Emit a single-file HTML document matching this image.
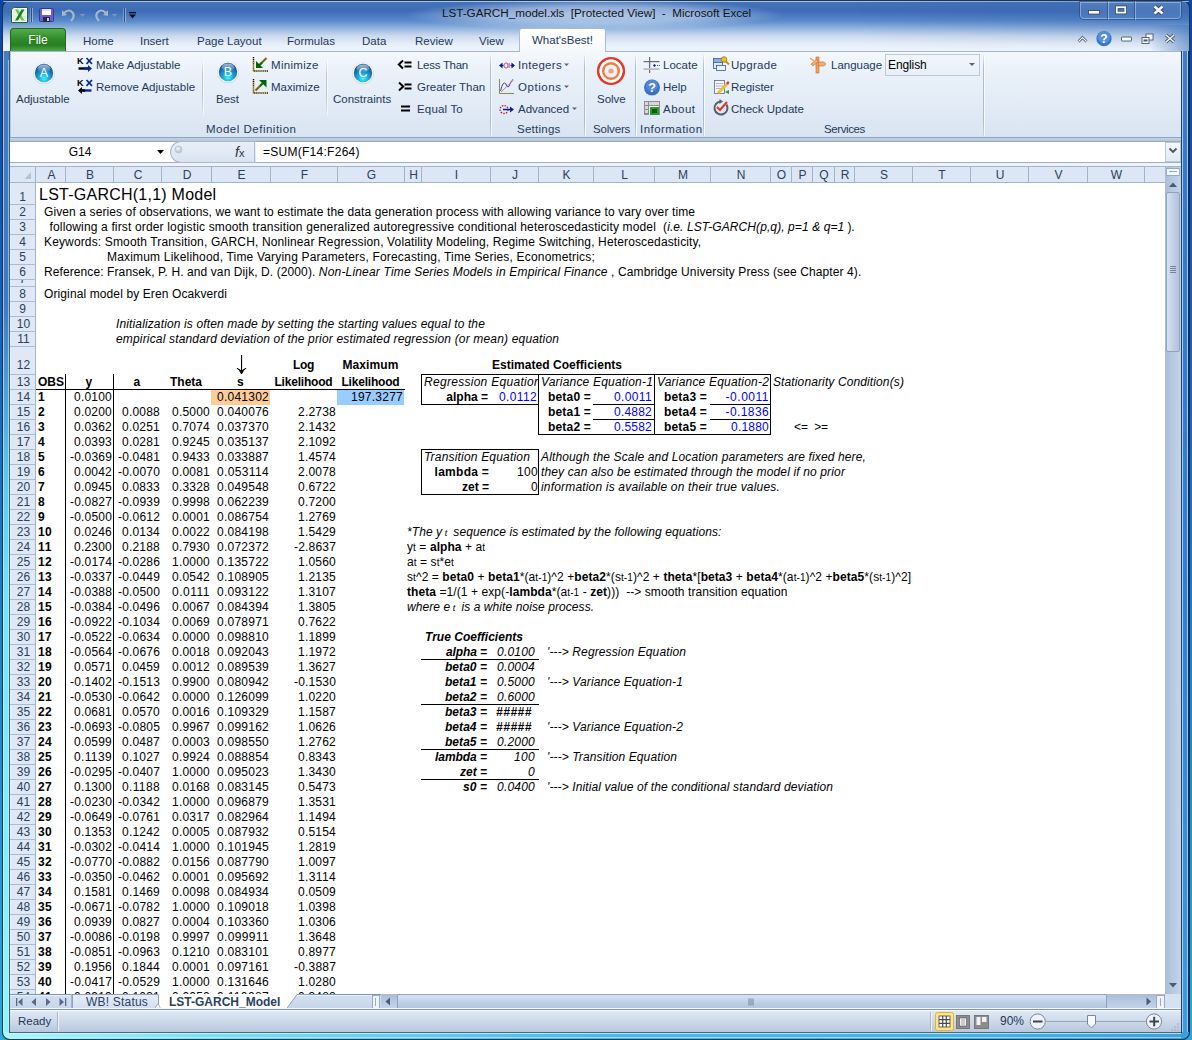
<!DOCTYPE html><html><head><meta charset="utf-8"><title>LST-GARCH_model.xls - Microsoft Excel</title><style>
*{margin:0;padding:0;box-sizing:border-box}
html,body{width:1192px;height:1040px;overflow:hidden;background:#fff}
body{position:relative;font-family:"Liberation Sans",sans-serif;}
.t{position:absolute;white-space:nowrap}
.b{position:absolute}
svg{position:absolute;overflow:visible}
</style></head><body>
<div class="b" style="left:0px;top:0px;width:1192px;height:1040px;background:linear-gradient(180deg,#0b45a6 0%,#1d6ec0 45%,#2aa8d8 100%)"></div>
<div class="b" style="left:2px;top:0px;width:8px;height:1040px;border-radius:8px 0 0 8px;border:1px solid #1b3550;border-right:none;background:linear-gradient(180deg,#4a7cc2 0px,#3f78c4 300px,#5cc8f0 480px,#70e6fc 600px,#90f4fc 1000px)"></div>
<div class="b" style="left:3px;top:6px;width:1px;height:1028px;background:rgba(220,250,255,0.6)"></div>
<div class="b" style="left:8px;top:60px;width:1px;height:970px;background:rgba(200,245,255,0.55)"></div>
<div class="b" style="left:1181px;top:0px;width:9px;height:1040px;border-radius:0 8px 8px 0;border:1px solid #10305a;border-left:none;background:linear-gradient(180deg,#4a7cc2 0px,#3578cc 200px,#3080d8 600px,#3a9ae0 1000px)"></div>
<div class="b" style="left:1182px;top:51px;width:1px;height:982px;background:#a8d0f4"></div>
<div class="b" style="left:1187px;top:20px;width:1px;height:1012px;background:#a0ccf4"></div>
<div class="b" style="left:1188px;top:6px;width:1px;height:1028px;background:#10305a"></div>
<div class="b" style="left:2px;top:1032px;width:1188px;height:8px;border-radius:0 0 8px 8px;border:1px solid #1e3c50;border-top:none;background:linear-gradient(90deg,#a8f8fc 0px,#7ae0f8 200px,#4ab8f0 600px,#42b0ec 1000px,#3aa0e0 1188px)"></div>
<div class="b" style="left:10px;top:1033px;width:1171px;height:1px;background:rgba(220,250,255,0.7)"></div>
<div class="b" style="left:10px;top:1037px;width:1171px;height:1px;background:rgba(200,240,255,0.6)"></div>
<div class="b" style="left:2px;top:0px;width:1188px;height:51px;border-radius:8px 8px 0 0;border:1px solid #1b3550;border-bottom:none;background:linear-gradient(180deg,#4673b9 0px,#3c6cb5 10px,#5a8bcc 20px,#98b8e0 28px,#cbdaee 35px,#e6eef8 43px,#f0f5fb 51px)"></div>
<div class="b" style="left:3px;top:1px;width:1186px;height:1px;border-radius:7px 7px 0 0;background:rgba(190,215,245,0.8)"></div>
<div class="b" style="left:860px;top:1px;width:329px;height:50px;border-radius:0 7px 0 0;background:linear-gradient(90deg,rgba(60,100,170,0) 0px,rgba(60,100,170,0.25) 180px,rgba(60,110,180,0.5) 329px);-webkit-mask-image:linear-gradient(180deg,#000 0px,#000 15px,rgba(0,0,0,0.3) 35px,rgba(0,0,0,0) 50px)"></div>
<div class="b" style="left:1150px;top:25px;width:39px;height:26px;background:linear-gradient(90deg,rgba(70,120,190,0) 0px,rgba(70,120,190,0.6) 39px)"></div>
<div class="b" style="left:405px;top:0px;width:380px;height:30px;background:radial-gradient(ellipse 50% 50% at center,rgba(225,236,250,0.7) 0%,rgba(225,236,250,0.5) 55%,rgba(225,236,250,0) 100%)"></div>
<div class="t" style="left:442px;top:5px;font-size:11.7px;line-height:16px;color:#141414;white-space:pre;letter-spacing:-0.02px">LST-GARCH_model.xls  [Protected View]  -  Microsoft Excel</div>
<svg style="left:11px;top:7px" width="17" height="16" viewBox="0 0 17 16">
<path d="M0.5 3.5 Q0.5 0.5 3.5 0.5 H16.5 V15.5 H0.5 Z" fill="#ffffff" stroke="#17692a" stroke-width="1"/>
<path d="M2 2 H15 V14 H2Z" fill="#e2f4e0"/>
<path d="M4 2.5 L7 2.5 L13.5 13.5 L10.5 13.5 Z" fill="#6cc24a"/>
<path d="M10.5 2.5 L13.5 2.5 L7 13.5 L4 13.5 Z" fill="#1d7b30"/>
</svg>
<div class="b" style="left:31px;top:8px;width:1px;height:14px;background:#3c4c62;box-shadow:1px 0 0 rgba(220,235,255,0.45),-1px 0 0 rgba(220,235,255,0.3)"></div>
<svg style="left:39px;top:8px" width="15" height="14" viewBox="0 0 15 14">
<rect x="0.5" y="0.5" width="14" height="13" rx="1" fill="#6b5fd0" stroke="#3d3596"/>
<rect x="3" y="1" width="9" height="6" fill="#ffffff"/>
<rect x="3" y="1" width="9" height="2" fill="#e0e6f4"/>
<rect x="4" y="9" width="7" height="5" fill="#262a3a"/>
<rect x="8" y="10" width="2" height="3" fill="#c8ccd8"/>
</svg>
<svg style="left:61px;top:8px" width="60" height="14" viewBox="0 0 60 14">
<path d="M3 5 Q8 0 12 5 Q14 9 10 13" fill="none" stroke="#a9b6c8" stroke-width="2.2"/>
<path d="M1 2 L6 7 L1 8 Z" fill="#a9b6c8"/>
<path d="M19 6 L24 6 L21.5 9 Z" fill="#8795aa"/>
<path d="M45 5 Q40 0 36 5 Q34 9 38 13" fill="none" stroke="#a9b6c8" stroke-width="2.2"/>
<path d="M47 2 L42 7 L47 8 Z" fill="#a9b6c8"/>
<path d="M51 6 L56 6 L53.5 9 Z" fill="#8795aa"/>
</svg>
<div class="b" style="left:124px;top:8px;width:1px;height:14px;background:#3c4c62;box-shadow:1px 0 0 rgba(220,235,255,0.45),-1px 0 0 rgba(220,235,255,0.3)"></div>
<svg style="left:128px;top:10px" width="10" height="10" viewBox="0 0 10 10">
<rect x="1" y="2" width="7" height="1.3" fill="#111"/>
<path d="M1 4.5 H8 L4.5 8.5 Z" fill="#111"/>
</svg>
<div class="b" style="left:1079px;top:1px;width:103px;height:19px;border:1px solid rgba(30,55,100,0.55);border-radius:0 0 5px 5px;background:linear-gradient(180deg,rgba(160,190,230,0.2),rgba(120,160,215,0.12));box-shadow:inset 0 0 0 1px rgba(200,225,250,0.45)"></div>
<div class="b" style="left:1107px;top:1px;width:1px;height:19px;background:rgba(30,55,100,0.5);box-shadow:1px 0 0 rgba(200,225,250,0.5)"></div>
<div class="b" style="left:1134px;top:1px;width:1px;height:19px;background:rgba(30,55,100,0.5);box-shadow:1px 0 0 rgba(200,225,250,0.5)"></div>
<svg style="left:1078px;top:0px" width="104" height="21" viewBox="0 0 104 21">
<rect x="10.5" y="10.5" width="11" height="3.6" fill="#f4f6fa" stroke="#3a4a60" stroke-width="0.9"/>
<rect x="38.8" y="7.2" width="8.4" height="5.4" fill="none" stroke="#3a4a60" stroke-width="3.4"/>
<rect x="38.8" y="7.2" width="8.4" height="5.4" fill="none" stroke="#f4f6fa" stroke-width="1.8"/>
<path d="M76.5 6.5 L84.5 13.5 M84.5 6.5 L76.5 13.5" stroke="#3a4a60" stroke-width="4.4"/>
<path d="M76.5 6.5 L84.5 13.5 M84.5 6.5 L76.5 13.5" stroke="#f4f6fa" stroke-width="2.6"/>
</svg>
<svg style="left:1076px;top:30px" width="104" height="18" viewBox="0 0 104 18">
<path d="M2.5 11.5 L6.5 7.5 L10.5 11.5" fill="none" stroke="#3a4a60" stroke-width="2.6"/>
<path d="M2.5 11.5 L6.5 7.5 L10.5 11.5" fill="none" stroke="#fafcff" stroke-width="1.1"/>
<circle cx="28" cy="8.7" r="7.6" fill="#3b78cc"/>
<circle cx="28" cy="7.2" r="6" fill="#6a9ee0" opacity="0.6"/>
<text x="28" y="13" font-family="Liberation Sans" font-weight="bold" font-size="12" fill="#fff" text-anchor="middle">?</text>
<rect x="45.5" y="7" width="10" height="4" rx="0.5" fill="#f8fafd" stroke="#4a5a70" stroke-width="0.9"/>
<rect x="70" y="4" width="7" height="6" fill="#f8fafd" stroke="#4a5a70" stroke-width="0.9"/>
<rect x="66" y="7.5" width="7" height="6" fill="#f8fafd" stroke="#4a5a70" stroke-width="0.9"/>
<rect x="67.5" y="9.5" width="4" height="2" fill="#4a5a70"/>
<path d="M90 5 L98 12 M98 5 L90 12" stroke="#4a5a70" stroke-width="3.2"/>
<path d="M90 5 L98 12 M98 5 L90 12" stroke="#f8fafd" stroke-width="1.4"/>
</svg>
<div class="b" style="left:10px;top:28px;width:56px;height:24px;border-radius:4px 4px 0 0;border:1px solid #206a1c;border-bottom:none;background:linear-gradient(180deg,#55ad4a 0%,#2f8a2a 45%,#2a7e26 70%,#52b048 100%)"></div>
<div class="t" style="left:10px;top:33px;font-size:12px;line-height:15px;color:#ffffff;width:56px;text-align:center;text-shadow:0 0 2px rgba(0,60,0,0.4)">File</div>
<div class="t" style="left:83px;top:34px;font-size:11.5px;line-height:15px;color:#1e395b;">Home</div>
<div class="t" style="left:140px;top:34px;font-size:11.5px;line-height:15px;color:#1e395b;">Insert</div>
<div class="t" style="left:197px;top:34px;font-size:11.5px;line-height:15px;color:#1e395b;">Page Layout</div>
<div class="t" style="left:287px;top:34px;font-size:11.5px;line-height:15px;color:#1e395b;">Formulas</div>
<div class="t" style="left:362px;top:34px;font-size:11.5px;line-height:15px;color:#1e395b;">Data</div>
<div class="t" style="left:415px;top:34px;font-size:11.5px;line-height:15px;color:#1e395b;">Review</div>
<div class="t" style="left:479px;top:34px;font-size:11.5px;line-height:15px;color:#1e395b;">View</div>
<div class="b" style="left:519px;top:28px;width:87px;height:25px;border:1px solid #a9bcd6;border-bottom:none;border-radius:3px 3px 0 0;background:linear-gradient(180deg,#ffffff 0%,#f4f8fd 100%)"></div>
<div class="t" style="left:532px;top:33px;font-size:11.5px;line-height:15px;color:#1e395b;">What'sBest!</div>
<div class="b" style="left:10px;top:51px;width:1172px;height:87px;border-top:1px solid #a5b7d0;border-left:1px solid #b8c8dc;border-right:1px solid #b8c8dc;background:linear-gradient(180deg,#f4f8fd 0px,#eaf1f9 20px,#e0e9f5 60px,#d9e4f2 86px)"></div>
<div class="b" style="left:520px;top:51px;width:85px;height:2px;background:#f4f8fd"></div>
<div class="b" style="left:10px;top:137px;width:1172px;height:1px;background:#8da5c4"></div>
<div class="b" style="left:10px;top:138px;width:1172px;height:3px;background:linear-gradient(180deg,#c4d2e3,#b5c5d9)"></div>
<div class="b" style="left:10px;top:141px;width:1172px;height:1px;background:#9aaac4"></div>
<div class="b" style="left:490px;top:55px;width:1px;height:81px;background:linear-gradient(180deg,rgba(170,190,215,0.2),#aabdd6 15%,#aabdd6 85%,rgba(170,190,215,0.4));box-shadow:1px 0 0 rgba(255,255,255,0.7)"></div>
<div class="b" style="left:584px;top:55px;width:1px;height:81px;background:linear-gradient(180deg,rgba(170,190,215,0.2),#aabdd6 15%,#aabdd6 85%,rgba(170,190,215,0.4));box-shadow:1px 0 0 rgba(255,255,255,0.7)"></div>
<div class="b" style="left:635px;top:55px;width:1px;height:81px;background:linear-gradient(180deg,rgba(170,190,215,0.2),#aabdd6 15%,#aabdd6 85%,rgba(170,190,215,0.4));box-shadow:1px 0 0 rgba(255,255,255,0.7)"></div>
<div class="b" style="left:703px;top:55px;width:1px;height:81px;background:linear-gradient(180deg,rgba(170,190,215,0.2),#aabdd6 15%,#aabdd6 85%,rgba(170,190,215,0.4));box-shadow:1px 0 0 rgba(255,255,255,0.7)"></div>
<div class="b" style="left:983px;top:55px;width:1px;height:81px;background:linear-gradient(180deg,rgba(170,190,215,0.2),#aabdd6 15%,#aabdd6 85%,rgba(170,190,215,0.4));box-shadow:1px 0 0 rgba(255,255,255,0.7)"></div>
<div class="b" style="left:202px;top:59px;width:1px;height:56px;background:linear-gradient(180deg,rgba(170,190,215,0),#b9c9dd 30%,#b9c9dd 70%,rgba(170,190,215,0));box-shadow:1px 0 0 rgba(255,255,255,0.6)"></div>
<div class="b" style="left:326px;top:59px;width:1px;height:56px;background:linear-gradient(180deg,rgba(170,190,215,0),#b9c9dd 30%,#b9c9dd 70%,rgba(170,190,215,0));box-shadow:1px 0 0 rgba(255,255,255,0.6)"></div>
<svg style="left:33px;top:62px" width="22" height="22" viewBox="0 0 22 22">
<defs><radialGradient id="gA" cx="50%" cy="80%" r="70%"><stop offset="0" stop-color="#3ff4ff"/><stop offset="0.4" stop-color="#1ea8d8"/><stop offset="1" stop-color="#0d4e98"/></radialGradient>
<linearGradient id="hA" x1="0" y1="0" x2="0" y2="1"><stop offset="0" stop-color="#fff" stop-opacity="0.65"/><stop offset="1" stop-color="#fff" stop-opacity="0"/></linearGradient></defs>
<circle cx="11" cy="11.4" r="10.9" fill="#cfd2d8"/>
<circle cx="11" cy="11" r="10.6" fill="#f2f3f5"/>
<circle cx="11" cy="11" r="9.2" fill="url(#gA)"/>
<ellipse cx="11" cy="6.5" rx="6.5" ry="4" fill="url(#hA)"/>
<text x="11" y="15.3" font-family="Liberation Sans" font-size="12.5" fill="#ffffff" text-anchor="middle">A</text>
</svg>
<svg style="left:217px;top:61px" width="22" height="22" viewBox="0 0 22 22">
<defs><radialGradient id="gB" cx="50%" cy="80%" r="70%"><stop offset="0" stop-color="#3ff4ff"/><stop offset="0.4" stop-color="#1ea8d8"/><stop offset="1" stop-color="#0d4e98"/></radialGradient>
<linearGradient id="hB" x1="0" y1="0" x2="0" y2="1"><stop offset="0" stop-color="#fff" stop-opacity="0.65"/><stop offset="1" stop-color="#fff" stop-opacity="0"/></linearGradient></defs>
<circle cx="11" cy="11.4" r="10.9" fill="#cfd2d8"/>
<circle cx="11" cy="11" r="10.6" fill="#f2f3f5"/>
<circle cx="11" cy="11" r="9.2" fill="url(#gB)"/>
<ellipse cx="11" cy="6.5" rx="6.5" ry="4" fill="url(#hB)"/>
<text x="11" y="15.3" font-family="Liberation Sans" font-size="12.5" fill="#ffffff" text-anchor="middle">B</text>
</svg>
<svg style="left:352px;top:62px" width="22" height="22" viewBox="0 0 22 22">
<defs><radialGradient id="gC" cx="50%" cy="80%" r="70%"><stop offset="0" stop-color="#3ff4ff"/><stop offset="0.4" stop-color="#1ea8d8"/><stop offset="1" stop-color="#0d4e98"/></radialGradient>
<linearGradient id="hC" x1="0" y1="0" x2="0" y2="1"><stop offset="0" stop-color="#fff" stop-opacity="0.65"/><stop offset="1" stop-color="#fff" stop-opacity="0"/></linearGradient></defs>
<circle cx="11" cy="11.4" r="10.9" fill="#cfd2d8"/>
<circle cx="11" cy="11" r="10.6" fill="#f2f3f5"/>
<circle cx="11" cy="11" r="9.2" fill="url(#gC)"/>
<ellipse cx="11" cy="6.5" rx="6.5" ry="4" fill="url(#hC)"/>
<text x="11" y="15.3" font-family="Liberation Sans" font-size="12.5" fill="#ffffff" text-anchor="middle">C</text>
</svg>
<div class="t" style="left:16px;top:92px;font-size:11.5px;line-height:15px;color:#1e395b;">Adjustable</div>
<div class="t" style="left:216px;top:92px;font-size:11.5px;line-height:15px;color:#1e395b;">Best</div>
<div class="t" style="left:333px;top:92px;font-size:11.5px;line-height:15px;color:#1e395b;">Constraints</div>
<svg style="left:77px;top:57px" width="17" height="16" viewBox="0 0 17 16">
<text x="0" y="7.2" font-family="Liberation Sans" font-weight="bold" font-size="9" fill="#000">K</text>
<path d="M9.5 1 L15 6.8 M15 1 L9.5 6.8" stroke="#0a2a9a" stroke-width="1.7"/>
<path d="M1.5 11.5 H12" stroke="#000" stroke-width="2.4"/><path d="M7 11.5 H12" stroke="#0a2a9a" stroke-width="2.4"/><path d="M11 8 L15 11.5 L11 15 Z" fill="#0a2a9a"/></svg>
<svg style="left:77px;top:79px" width="17" height="16" viewBox="0 0 17 16">
<text x="0" y="7.2" font-family="Liberation Sans" font-weight="bold" font-size="9" fill="#000">K</text>
<path d="M9.5 1 L15 6.8 M15 1 L9.5 6.8" stroke="#0a2a9a" stroke-width="1.7"/>
<path d="M4 11.5 H14.5" stroke="#0a2a9a" stroke-width="2.4"/><path d="M4 11.5 H8" stroke="#000" stroke-width="2.4"/><path d="M5 8 L1 11.5 L5 15 Z" fill="#000"/></svg>
<div class="t" style="left:96px;top:58px;font-size:11.5px;line-height:15px;color:#1e395b;">Make Adjustable</div>
<div class="t" style="left:96px;top:80px;font-size:11.5px;line-height:15px;color:#1e395b;">Remove Adjustable</div>
<svg style="left:251px;top:56px" width="18" height="38" viewBox="0 0 18 38">
<path d="M2.5 1 V15 H17" fill="none" stroke="#000" stroke-width="1.4" stroke-dasharray="1.2 0.9"/>
<path d="M2.5 1 V15 H17" fill="none" stroke="#c9a400" stroke-width="1.4" stroke-dasharray="0.9 1.2" stroke-dashoffset="1.2"/>
<path d="M15.5 2 L9 8.5" stroke="#7a6a10" stroke-width="2.2"/>
<path d="M11 6.5 L7.5 10" stroke="#1a6a1a" stroke-width="2"/>
<path d="M5 5 V12 H12 Z" fill="#006400"/>
<path d="M2.5 23 V37 H17" fill="none" stroke="#000" stroke-width="1.4" stroke-dasharray="1.2 0.9"/>
<path d="M2.5 23 V37 H17" fill="none" stroke="#c9a400" stroke-width="1.4" stroke-dasharray="0.9 1.2" stroke-dashoffset="1.2"/>
<path d="M4.5 34.5 L11 28" stroke="#7a6a10" stroke-width="2.2"/>
<path d="M9 30 L12.5 26.5" stroke="#1a6a1a" stroke-width="2"/>
<path d="M8 24 H15.5 V31.5 Z" fill="#006400"/>
</svg>
<div class="t" style="left:271px;top:58px;font-size:11.5px;line-height:15px;color:#1e395b;letter-spacing:0.3px">Minimize</div>
<div class="t" style="left:271px;top:80px;font-size:11.5px;line-height:15px;color:#1e395b;">Maximize</div>
<svg style="left:397px;top:58px" width="18" height="58" viewBox="0 0 18 58">
<path d="M6 2.5 L1.8 6.5 L6 10.5" fill="none" stroke="#000" stroke-width="2"/>
<rect x="7.5" y="3.5" width="7" height="2" fill="#000"/><rect x="7.5" y="7.5" width="7" height="2" fill="#000"/>
<path d="M2 24.5 L6.2 28.5 L2 32.5" fill="none" stroke="#000" stroke-width="2"/>
<rect x="7.5" y="25.5" width="7" height="2" fill="#000"/><rect x="7.5" y="29.5" width="7" height="2" fill="#000"/>
<rect x="4" y="47.5" width="9" height="2" fill="#000"/><rect x="4" y="51.5" width="9" height="2" fill="#000"/>
</svg>
<div class="t" style="left:417px;top:58px;font-size:11.5px;line-height:15px;color:#1e395b;letter-spacing:-0.28px">Less Than</div>
<div class="t" style="left:417px;top:80px;font-size:11.5px;line-height:15px;color:#1e395b;">Greater Than</div>
<div class="t" style="left:417px;top:102px;font-size:11.5px;line-height:15px;color:#1e395b;letter-spacing:0.17px">Equal To</div>
<div class="t" style="left:206px;top:122px;font-size:11.5px;line-height:15px;color:#1e395b;letter-spacing:0.5px">Model Definition</div>
<svg style="left:498px;top:57px" width="20" height="60" viewBox="0 0 20 60">
<path d="M1 8.5 L4.5 5.5 V11.5 Z" fill="#0d1f8a"/><path d="M17 8.5 L13.5 5.5 V11.5 Z" fill="#0d1f8a"/>
<rect x="3" y="7.8" width="2.5" height="1.4" fill="#0d1f8a"/><rect x="12.5" y="7.8" width="2.5" height="1.4" fill="#0d1f8a"/>
<ellipse cx="8" cy="8.5" rx="2" ry="2.6" fill="none" stroke="#d04a7a" stroke-width="1"/>
<rect x="10.6" y="6" width="1" height="5" fill="#d04a7a"/>
<path d="M1.5 22 V36.5 H16" fill="none" stroke="#8a8a50" stroke-width="1"/>
<path d="M2.5 34 Q5 23 8 27 Q10 33 12 27 Q13.5 23 15 22.5" fill="none" stroke="#3a4aaa" stroke-width="1"/>
<path d="M3 35 L15.5 23" stroke="#d07a9a" stroke-width="1"/>
<circle cx="6" cy="52.5" r="4" fill="none" stroke="#c02040" stroke-width="1.3" stroke-dasharray="1.5 1.2"/>
<path d="M5 52.5 H13" stroke="#0d1f8a" stroke-width="1.5"/><path d="M12 49.5 L16 52.5 L12 55.5 Z" fill="#0d1f8a"/>
</svg>
<div class="t" style="left:518px;top:58px;font-size:11.5px;line-height:15px;color:#1e395b;letter-spacing:0.3px">Integers</div>
<div class="t" style="left:518px;top:80px;font-size:11.5px;line-height:15px;color:#1e395b;letter-spacing:0.55px">Options</div>
<div class="t" style="left:518px;top:102px;font-size:11.5px;line-height:15px;color:#1e395b;">Advanced</div>
<svg style="left:562px;top:62px" width="18" height="52" viewBox="0 0 18 52">
<path d="M2 1.5 H7 L4.5 4 Z" fill="#5a6270"/>
<path d="M2 23.5 H7 L4.5 26 Z" fill="#5a6270"/>
<path d="M10 45.5 H15 L12.5 48 Z" fill="#5a6270"/>
</svg>
<div class="t" style="left:517px;top:122px;font-size:11.5px;line-height:15px;color:#1e395b;letter-spacing:0.25px">Settings</div>
<svg style="left:596px;top:56px" width="30" height="30" viewBox="0 0 30 30">
<circle cx="15" cy="15" r="12.8" fill="none" stroke="#e23a26" stroke-width="2.6"/>
<circle cx="15" cy="15" r="10.4" fill="none" stroke="#ffffff" stroke-width="2"/>
<circle cx="15" cy="15" r="7.8" fill="none" stroke="#f37a3a" stroke-width="2.4"/>
<circle cx="15" cy="15" r="2.6" fill="#f7a078"/>
</svg>
<div class="t" style="left:597px;top:92px;font-size:11.5px;line-height:15px;color:#1e395b;">Solve</div>
<div class="t" style="left:593px;top:122px;font-size:11.5px;line-height:15px;color:#1e395b;letter-spacing:-0.17px">Solvers</div>
<svg style="left:643px;top:56px" width="18" height="60" viewBox="0 0 18 60">
<rect x="6" y="1" width="1.2" height="16" fill="#6a6a6a"/>
<rect x="0.5" y="5" width="16" height="1.2" fill="#6a6a6a"/>
<rect x="0.5" y="12.2" width="16" height="1.8" fill="#b8bcc4"/>
<path d="M10 9.5 L11.5 8 L13 9.5 L11.5 11Z" fill="#0d1f8a"/><rect x="14" y="9" width="0.9" height="0.9" fill="#0d1f8a"/><rect x="15.8" y="9" width="0.9" height="0.9" fill="#0d1f8a"/>
<circle cx="9" cy="31.5" r="8" fill="#3c72c8"/>
<circle cx="9" cy="29.5" r="6" fill="#6a9ae0" opacity="0.5"/>
<text x="9" y="36" font-family="Liberation Sans" font-weight="bold" font-size="12.5" fill="#fff" text-anchor="middle">?</text>
<rect x="1" y="45" width="16" height="14" fill="#8a8d92"/>
<rect x="2" y="46" width="3" height="3" fill="#d8d8d8"/><rect x="2" y="50" width="3" height="3" fill="#d8d8d8"/><rect x="2" y="54" width="3" height="3" fill="#d8d8d8"/>
<rect x="6" y="46" width="10" height="3" fill="#d8d8d8"/>
<rect x="6" y="50" width="10" height="9" fill="#ffffff"/>
<rect x="7" y="51" width="9" height="8" fill="#2a9a2a"/><rect x="9" y="53" width="5" height="4" fill="#0a5a0a"/>
</svg>
<div class="t" style="left:663px;top:58px;font-size:11.5px;line-height:15px;color:#1e395b;">Locate</div>
<div class="t" style="left:663px;top:80px;font-size:11.5px;line-height:15px;color:#1e395b;">Help</div>
<div class="t" style="left:663px;top:102px;font-size:11.5px;line-height:15px;color:#1e395b;letter-spacing:0.5px">About</div>
<div class="t" style="left:640px;top:122px;font-size:11.5px;line-height:15px;color:#1e395b;letter-spacing:0.45px">Information</div>
<svg style="left:712px;top:56px" width="18" height="62" viewBox="0 0 18 62">
<rect x="1.5" y="2.5" width="9" height="6" fill="#8ab0e8" stroke="#3a5aa0" stroke-width="0.8"/>
<rect x="1.5" y="6.5" width="9" height="6" fill="#dde8f8" stroke="#3a5aa0" stroke-width="0.8"/>
<rect x="4.5" y="9.5" width="9" height="5" fill="#eef3fb" stroke="#3a5aa0" stroke-width="0.8"/>
<circle cx="12" cy="3.5" r="2.8" fill="#f0c020" stroke="#8a6a00" stroke-width="0.7"/>
<path d="M13.5 5 L17 8.5" stroke="#c09010" stroke-width="2"/>
<rect x="2.5" y="24.5" width="10" height="13" fill="#f4f6fa" stroke="#5a6a8a" stroke-width="0.8"/>
<path d="M4 27.5 H11 M4 30 H11 M4 32.5 H9" stroke="#8a96b0" stroke-width="0.7"/>
<path d="M5 36 L14 27 L16 29 L7 38 Z" fill="#e8c030"/>
<path d="M14 27 L16 25 L17.5 26.5 L16 29Z" fill="#c04040"/>
<path d="M13 36 L17 34 L17 38 Z" fill="#2a9a3a"/>
<path d="M14.5 48.5 A6.5 6.5 0 1 1 9 45.5" fill="none" stroke="#5a5e66" stroke-width="2"/>
<path d="M7.5 43 L11 45.5 L7.5 48" fill="#5a5e66"/>
<path d="M5 51 L8 54 L15 46" fill="none" stroke="#e23a26" stroke-width="2.2"/>
</svg>
<div class="t" style="left:731px;top:58px;font-size:11.5px;line-height:15px;color:#1e395b;letter-spacing:0.28px">Upgrade</div>
<div class="t" style="left:731px;top:80px;font-size:11.5px;line-height:15px;color:#1e395b;">Register</div>
<div class="t" style="left:731px;top:102px;font-size:11.5px;line-height:15px;color:#1e395b;">Check Update</div>
<svg style="left:809px;top:56px" width="18" height="18" viewBox="0 0 18 18">
<rect x="7" y="1" width="3" height="16" fill="#f0a060" stroke="#c86a30" stroke-width="0.6"/>
<path d="M9.5 6 H15 L17 8 L15 10 H9.5 Z" fill="#f4b070" stroke="#c86a30" stroke-width="0.6"/>
<path d="M8 3 L2 8 L4 10 L9 6Z" fill="#f4b070" stroke="#c86a30" stroke-width="0.6"/>
<path d="M1 2 L5 5" stroke="#f0a060" stroke-width="1.5"/>
</svg>
<div class="t" style="left:831px;top:58px;font-size:11.5px;line-height:15px;color:#1e395b;">Language</div>
<div class="b" style="left:885px;top:54px;width:95px;height:22px;border:1px solid #b9c9dd;background:linear-gradient(180deg,#f2f6fb,#eaf0f8)"></div>
<div class="t" style="left:888px;top:58px;font-size:12px;line-height:15px;color:#000000;letter-spacing:-0.1px">English</div>
<svg style="left:968px;top:62px" width="10" height="6" viewBox="0 0 10 6"><path d="M1 1 H7 L4 4 Z" fill="#5a6270"/></svg>
<div class="t" style="left:824px;top:122px;font-size:11.5px;line-height:15px;color:#1e395b;letter-spacing:-0.39px">Services</div>
<div class="b" style="left:10px;top:142px;width:1172px;height:20px;background:#ffffff"></div>
<div class="b" style="left:10px;top:162px;width:1171px;height:1px;background:#a0afc6"></div>
<div class="b" style="left:10px;top:163px;width:1171px;height:3px;background:#eef3fa"></div>
<div class="b" style="left:10px;top:166px;width:1171px;height:1px;background:#a3b3c8"></div>
<div class="t" style="left:10px;top:145px;font-size:12px;line-height:15px;color:#000;width:140px;text-align:center;">G14</div>
<svg style="left:156px;top:149px" width="10" height="7" viewBox="0 0 10 7"><path d="M1 1 H8 L4.5 5 Z" fill="#000"/></svg>
<div class="b" style="left:170px;top:141px;width:86px;height:22px;border:1px solid #a9b9cf;border-right:none;border-radius:11px 0 0 11px;background:linear-gradient(180deg,#e9eff8,#d9e3f0)"></div>
<svg style="left:173px;top:144px" width="12" height="12" viewBox="0 0 12 12"><circle cx="5.5" cy="5.5" r="3.5" fill="#c2ccd9" stroke="#b0bccb" stroke-width="0.6"/><circle cx="5" cy="4.8" r="2" fill="#e6ebf2"/></svg>
<div class="b" style="left:254px;top:142px;width:1px;height:20px;background:#b0bfd2"></div>
<div class="t" style="left:235px;top:144px;font-size:14px;line-height:16px;color:#333;font-family:"Liberation Serif",serif;font-weight:bold;letter-spacing:-1px"><i>f</i><span style="font-size:11px">x</span></div>
<div class="t" style="left:263px;top:145px;font-size:12px;line-height:15px;color:#000;letter-spacing:0.269px">=SUM(F14:F264)</div>
<div class="b" style="left:1165px;top:142px;width:16px;height:20px;border:1px solid #b9c8dc;background:linear-gradient(180deg,#f4f7fb,#e3eaf4)"></div>
<svg style="left:1168px;top:147px" width="10" height="8" viewBox="0 0 10 8"><path d="M1.5 1.5 L5 5 L8.5 1.5" fill="none" stroke="#4a5468" stroke-width="1.8"/></svg>
<div class="b" style="left:36px;top:183px;width:1129px;height:811px;background:#ffffff"></div>
<div class="b" style="left:10px;top:167px;width:1155px;height:16px;background:#dce6f4"></div>
<div class="b" style="left:10px;top:182px;width:1155px;height:1px;background:#9eb6ce"></div>
<div class="b" style="left:10px;top:167px;width:25px;height:15px;background:#dce6f4"></div>
<svg style="left:22px;top:170px" width="12" height="11" viewBox="0 0 12 11"><path d="M9 2 V9 H2.5 Z" fill="#b4c3d6"/></svg>
<div class="b" style="left:35px;top:167px;width:1px;height:15px;background:#9eb6ce"></div>
<div class="t" style="left:37px;top:168px;font-size:12px;line-height:14px;color:#2b3f5f;width:29px;text-align:center;">A</div>
<div class="b" style="left:65px;top:167px;width:1px;height:15px;background:#9eb6ce"></div>
<div class="t" style="left:66px;top:168px;font-size:12px;line-height:14px;color:#2b3f5f;width:48px;text-align:center;">B</div>
<div class="b" style="left:113px;top:167px;width:1px;height:15px;background:#9eb6ce"></div>
<div class="t" style="left:114px;top:168px;font-size:12px;line-height:14px;color:#2b3f5f;width:48px;text-align:center;">C</div>
<div class="b" style="left:161px;top:167px;width:1px;height:15px;background:#9eb6ce"></div>
<div class="t" style="left:162px;top:168px;font-size:12px;line-height:14px;color:#2b3f5f;width:50px;text-align:center;">D</div>
<div class="b" style="left:211px;top:167px;width:1px;height:15px;background:#9eb6ce"></div>
<div class="t" style="left:212px;top:168px;font-size:12px;line-height:14px;color:#2b3f5f;width:59px;text-align:center;">E</div>
<div class="b" style="left:270px;top:167px;width:1px;height:15px;background:#9eb6ce"></div>
<div class="t" style="left:271px;top:168px;font-size:12px;line-height:14px;color:#2b3f5f;width:67px;text-align:center;">F</div>
<div class="b" style="left:337px;top:167px;width:1px;height:15px;background:#9eb6ce"></div>
<div class="t" style="left:338px;top:168px;font-size:12px;line-height:14px;color:#2b3f5f;width:67px;text-align:center;">G</div>
<div class="b" style="left:404px;top:167px;width:1px;height:15px;background:#9eb6ce"></div>
<div class="t" style="left:405px;top:168px;font-size:12px;line-height:14px;color:#2b3f5f;width:17px;text-align:center;">H</div>
<div class="b" style="left:421px;top:167px;width:1px;height:15px;background:#9eb6ce"></div>
<div class="t" style="left:422px;top:168px;font-size:12px;line-height:14px;color:#2b3f5f;width:69px;text-align:center;">I</div>
<div class="b" style="left:490px;top:167px;width:1px;height:15px;background:#9eb6ce"></div>
<div class="t" style="left:491px;top:168px;font-size:12px;line-height:14px;color:#2b3f5f;width:48px;text-align:center;">J</div>
<div class="b" style="left:538px;top:167px;width:1px;height:15px;background:#9eb6ce"></div>
<div class="t" style="left:539px;top:168px;font-size:12px;line-height:14px;color:#2b3f5f;width:55px;text-align:center;">K</div>
<div class="b" style="left:593px;top:167px;width:1px;height:15px;background:#9eb6ce"></div>
<div class="t" style="left:594px;top:168px;font-size:12px;line-height:14px;color:#2b3f5f;width:61px;text-align:center;">L</div>
<div class="b" style="left:654px;top:167px;width:1px;height:15px;background:#9eb6ce"></div>
<div class="t" style="left:655px;top:168px;font-size:12px;line-height:14px;color:#2b3f5f;width:56px;text-align:center;">M</div>
<div class="b" style="left:710px;top:167px;width:1px;height:15px;background:#9eb6ce"></div>
<div class="t" style="left:711px;top:168px;font-size:12px;line-height:14px;color:#2b3f5f;width:60px;text-align:center;">N</div>
<div class="b" style="left:770px;top:167px;width:1px;height:15px;background:#9eb6ce"></div>
<div class="t" style="left:771px;top:168px;font-size:12px;line-height:14px;color:#2b3f5f;width:21px;text-align:center;">O</div>
<div class="b" style="left:791px;top:167px;width:1px;height:15px;background:#9eb6ce"></div>
<div class="t" style="left:792px;top:168px;font-size:12px;line-height:14px;color:#2b3f5f;width:21px;text-align:center;">P</div>
<div class="b" style="left:812px;top:167px;width:1px;height:15px;background:#9eb6ce"></div>
<div class="t" style="left:813px;top:168px;font-size:12px;line-height:14px;color:#2b3f5f;width:22px;text-align:center;">Q</div>
<div class="b" style="left:834px;top:167px;width:1px;height:15px;background:#9eb6ce"></div>
<div class="t" style="left:835px;top:168px;font-size:12px;line-height:14px;color:#2b3f5f;width:20px;text-align:center;">R</div>
<div class="b" style="left:854px;top:167px;width:1px;height:15px;background:#9eb6ce"></div>
<div class="t" style="left:855px;top:168px;font-size:12px;line-height:14px;color:#2b3f5f;width:58px;text-align:center;">S</div>
<div class="b" style="left:912px;top:167px;width:1px;height:15px;background:#9eb6ce"></div>
<div class="t" style="left:913px;top:168px;font-size:12px;line-height:14px;color:#2b3f5f;width:58px;text-align:center;">T</div>
<div class="b" style="left:970px;top:167px;width:1px;height:15px;background:#9eb6ce"></div>
<div class="t" style="left:971px;top:168px;font-size:12px;line-height:14px;color:#2b3f5f;width:58px;text-align:center;">U</div>
<div class="b" style="left:1028px;top:167px;width:1px;height:15px;background:#9eb6ce"></div>
<div class="t" style="left:1029px;top:168px;font-size:12px;line-height:14px;color:#2b3f5f;width:59px;text-align:center;">V</div>
<div class="b" style="left:1087px;top:167px;width:1px;height:15px;background:#9eb6ce"></div>
<div class="t" style="left:1088px;top:168px;font-size:12px;line-height:14px;color:#2b3f5f;width:57px;text-align:center;">W</div>
<div class="b" style="left:1144px;top:167px;width:1px;height:15px;background:#9eb6ce"></div>
<div class="b" style="left:10px;top:183px;width:25px;height:811px;background:#dfe8f4"></div>
<div class="b" style="left:10px;top:183px;width:1px;height:811px;background:#eaf1fa"></div>
<div class="b" style="left:35px;top:183px;width:1px;height:811px;background:#9eb6ce"></div>
<div class="b" style="left:10px;top:204px;width:25px;height:1px;background:#a9bcd3"></div>
<div class="t" style="left:10px;top:190px;font-size:12px;line-height:15px;color:#2b3f5f;width:25px;text-align:center;">1</div>
<div class="b" style="left:10px;top:219px;width:25px;height:1px;background:#a9bcd3"></div>
<div class="t" style="left:10px;top:205px;font-size:12px;line-height:15px;color:#2b3f5f;width:25px;text-align:center;">2</div>
<div class="b" style="left:10px;top:234px;width:25px;height:1px;background:#a9bcd3"></div>
<div class="t" style="left:10px;top:220px;font-size:12px;line-height:15px;color:#2b3f5f;width:25px;text-align:center;">3</div>
<div class="b" style="left:10px;top:249px;width:25px;height:1px;background:#a9bcd3"></div>
<div class="t" style="left:10px;top:235px;font-size:12px;line-height:15px;color:#2b3f5f;width:25px;text-align:center;">4</div>
<div class="b" style="left:10px;top:264px;width:25px;height:1px;background:#a9bcd3"></div>
<div class="t" style="left:10px;top:250px;font-size:12px;line-height:15px;color:#2b3f5f;width:25px;text-align:center;">5</div>
<div class="b" style="left:10px;top:279px;width:25px;height:1px;background:#a9bcd3"></div>
<div class="t" style="left:10px;top:265px;font-size:12px;line-height:15px;color:#2b3f5f;width:25px;text-align:center;">6</div>
<div class="b" style="left:10px;top:286px;width:25px;height:1px;background:#a9bcd3"></div>
<div class="b" style="left:11px;top:280px;width:25px;height:6px;overflow:hidden"><div class="t" style="left:-1px;top:-8px;width:25px;text-align:center;font-size:12px;line-height:15px;color:#2b3f5f">7</div></div>
<div class="b" style="left:10px;top:301px;width:25px;height:1px;background:#a9bcd3"></div>
<div class="t" style="left:10px;top:287px;font-size:12px;line-height:15px;color:#2b3f5f;width:25px;text-align:center;">8</div>
<div class="b" style="left:10px;top:316px;width:25px;height:1px;background:#a9bcd3"></div>
<div class="t" style="left:10px;top:302px;font-size:12px;line-height:15px;color:#2b3f5f;width:25px;text-align:center;">9</div>
<div class="b" style="left:10px;top:331px;width:25px;height:1px;background:#a9bcd3"></div>
<div class="t" style="left:11px;top:317px;font-size:12px;line-height:15px;color:#2b3f5f;width:25px;text-align:center;">10</div>
<div class="b" style="left:10px;top:346px;width:25px;height:1px;background:#a9bcd3"></div>
<div class="t" style="left:11px;top:332px;font-size:12px;line-height:15px;color:#2b3f5f;width:25px;text-align:center;">11</div>
<div class="b" style="left:10px;top:374px;width:25px;height:1px;background:#a9bcd3"></div>
<div class="t" style="left:11px;top:358px;font-size:12px;line-height:15px;color:#2b3f5f;width:25px;text-align:center;">12</div>
<div class="b" style="left:10px;top:389px;width:25px;height:1px;background:#a9bcd3"></div>
<div class="t" style="left:11px;top:375px;font-size:12px;line-height:15px;color:#2b3f5f;width:25px;text-align:center;">13</div>
<div class="b" style="left:10px;top:404px;width:25px;height:1px;background:#a9bcd3"></div>
<div class="t" style="left:11px;top:390px;font-size:12px;line-height:15px;color:#2b3f5f;width:25px;text-align:center;">14</div>
<div class="b" style="left:10px;top:419px;width:25px;height:1px;background:#a9bcd3"></div>
<div class="t" style="left:11px;top:405px;font-size:12px;line-height:15px;color:#2b3f5f;width:25px;text-align:center;">15</div>
<div class="b" style="left:10px;top:434px;width:25px;height:1px;background:#a9bcd3"></div>
<div class="t" style="left:11px;top:420px;font-size:12px;line-height:15px;color:#2b3f5f;width:25px;text-align:center;">16</div>
<div class="b" style="left:10px;top:449px;width:25px;height:1px;background:#a9bcd3"></div>
<div class="t" style="left:11px;top:435px;font-size:12px;line-height:15px;color:#2b3f5f;width:25px;text-align:center;">17</div>
<div class="b" style="left:10px;top:464px;width:25px;height:1px;background:#a9bcd3"></div>
<div class="t" style="left:11px;top:450px;font-size:12px;line-height:15px;color:#2b3f5f;width:25px;text-align:center;">18</div>
<div class="b" style="left:10px;top:479px;width:25px;height:1px;background:#a9bcd3"></div>
<div class="t" style="left:11px;top:465px;font-size:12px;line-height:15px;color:#2b3f5f;width:25px;text-align:center;">19</div>
<div class="b" style="left:10px;top:494px;width:25px;height:1px;background:#a9bcd3"></div>
<div class="t" style="left:11px;top:480px;font-size:12px;line-height:15px;color:#2b3f5f;width:25px;text-align:center;">20</div>
<div class="b" style="left:10px;top:509px;width:25px;height:1px;background:#a9bcd3"></div>
<div class="t" style="left:11px;top:495px;font-size:12px;line-height:15px;color:#2b3f5f;width:25px;text-align:center;">21</div>
<div class="b" style="left:10px;top:524px;width:25px;height:1px;background:#a9bcd3"></div>
<div class="t" style="left:11px;top:510px;font-size:12px;line-height:15px;color:#2b3f5f;width:25px;text-align:center;">22</div>
<div class="b" style="left:10px;top:539px;width:25px;height:1px;background:#a9bcd3"></div>
<div class="t" style="left:11px;top:525px;font-size:12px;line-height:15px;color:#2b3f5f;width:25px;text-align:center;">23</div>
<div class="b" style="left:10px;top:554px;width:25px;height:1px;background:#a9bcd3"></div>
<div class="t" style="left:11px;top:540px;font-size:12px;line-height:15px;color:#2b3f5f;width:25px;text-align:center;">24</div>
<div class="b" style="left:10px;top:569px;width:25px;height:1px;background:#a9bcd3"></div>
<div class="t" style="left:11px;top:555px;font-size:12px;line-height:15px;color:#2b3f5f;width:25px;text-align:center;">25</div>
<div class="b" style="left:10px;top:584px;width:25px;height:1px;background:#a9bcd3"></div>
<div class="t" style="left:11px;top:570px;font-size:12px;line-height:15px;color:#2b3f5f;width:25px;text-align:center;">26</div>
<div class="b" style="left:10px;top:599px;width:25px;height:1px;background:#a9bcd3"></div>
<div class="t" style="left:11px;top:585px;font-size:12px;line-height:15px;color:#2b3f5f;width:25px;text-align:center;">27</div>
<div class="b" style="left:10px;top:614px;width:25px;height:1px;background:#a9bcd3"></div>
<div class="t" style="left:11px;top:600px;font-size:12px;line-height:15px;color:#2b3f5f;width:25px;text-align:center;">28</div>
<div class="b" style="left:10px;top:629px;width:25px;height:1px;background:#a9bcd3"></div>
<div class="t" style="left:11px;top:615px;font-size:12px;line-height:15px;color:#2b3f5f;width:25px;text-align:center;">29</div>
<div class="b" style="left:10px;top:644px;width:25px;height:1px;background:#a9bcd3"></div>
<div class="t" style="left:11px;top:630px;font-size:12px;line-height:15px;color:#2b3f5f;width:25px;text-align:center;">30</div>
<div class="b" style="left:10px;top:659px;width:25px;height:1px;background:#a9bcd3"></div>
<div class="t" style="left:11px;top:645px;font-size:12px;line-height:15px;color:#2b3f5f;width:25px;text-align:center;">31</div>
<div class="b" style="left:10px;top:674px;width:25px;height:1px;background:#a9bcd3"></div>
<div class="t" style="left:11px;top:660px;font-size:12px;line-height:15px;color:#2b3f5f;width:25px;text-align:center;">32</div>
<div class="b" style="left:10px;top:689px;width:25px;height:1px;background:#a9bcd3"></div>
<div class="t" style="left:11px;top:675px;font-size:12px;line-height:15px;color:#2b3f5f;width:25px;text-align:center;">33</div>
<div class="b" style="left:10px;top:704px;width:25px;height:1px;background:#a9bcd3"></div>
<div class="t" style="left:11px;top:690px;font-size:12px;line-height:15px;color:#2b3f5f;width:25px;text-align:center;">34</div>
<div class="b" style="left:10px;top:719px;width:25px;height:1px;background:#a9bcd3"></div>
<div class="t" style="left:11px;top:705px;font-size:12px;line-height:15px;color:#2b3f5f;width:25px;text-align:center;">35</div>
<div class="b" style="left:10px;top:734px;width:25px;height:1px;background:#a9bcd3"></div>
<div class="t" style="left:11px;top:720px;font-size:12px;line-height:15px;color:#2b3f5f;width:25px;text-align:center;">36</div>
<div class="b" style="left:10px;top:749px;width:25px;height:1px;background:#a9bcd3"></div>
<div class="t" style="left:11px;top:735px;font-size:12px;line-height:15px;color:#2b3f5f;width:25px;text-align:center;">37</div>
<div class="b" style="left:10px;top:764px;width:25px;height:1px;background:#a9bcd3"></div>
<div class="t" style="left:11px;top:750px;font-size:12px;line-height:15px;color:#2b3f5f;width:25px;text-align:center;">38</div>
<div class="b" style="left:10px;top:779px;width:25px;height:1px;background:#a9bcd3"></div>
<div class="t" style="left:11px;top:765px;font-size:12px;line-height:15px;color:#2b3f5f;width:25px;text-align:center;">39</div>
<div class="b" style="left:10px;top:794px;width:25px;height:1px;background:#a9bcd3"></div>
<div class="t" style="left:11px;top:780px;font-size:12px;line-height:15px;color:#2b3f5f;width:25px;text-align:center;">40</div>
<div class="b" style="left:10px;top:809px;width:25px;height:1px;background:#a9bcd3"></div>
<div class="t" style="left:11px;top:795px;font-size:12px;line-height:15px;color:#2b3f5f;width:25px;text-align:center;">41</div>
<div class="b" style="left:10px;top:824px;width:25px;height:1px;background:#a9bcd3"></div>
<div class="t" style="left:11px;top:810px;font-size:12px;line-height:15px;color:#2b3f5f;width:25px;text-align:center;">42</div>
<div class="b" style="left:10px;top:839px;width:25px;height:1px;background:#a9bcd3"></div>
<div class="t" style="left:11px;top:825px;font-size:12px;line-height:15px;color:#2b3f5f;width:25px;text-align:center;">43</div>
<div class="b" style="left:10px;top:854px;width:25px;height:1px;background:#a9bcd3"></div>
<div class="t" style="left:11px;top:840px;font-size:12px;line-height:15px;color:#2b3f5f;width:25px;text-align:center;">44</div>
<div class="b" style="left:10px;top:869px;width:25px;height:1px;background:#a9bcd3"></div>
<div class="t" style="left:11px;top:855px;font-size:12px;line-height:15px;color:#2b3f5f;width:25px;text-align:center;">45</div>
<div class="b" style="left:10px;top:884px;width:25px;height:1px;background:#a9bcd3"></div>
<div class="t" style="left:11px;top:870px;font-size:12px;line-height:15px;color:#2b3f5f;width:25px;text-align:center;">46</div>
<div class="b" style="left:10px;top:899px;width:25px;height:1px;background:#a9bcd3"></div>
<div class="t" style="left:11px;top:885px;font-size:12px;line-height:15px;color:#2b3f5f;width:25px;text-align:center;">47</div>
<div class="b" style="left:10px;top:914px;width:25px;height:1px;background:#a9bcd3"></div>
<div class="t" style="left:11px;top:900px;font-size:12px;line-height:15px;color:#2b3f5f;width:25px;text-align:center;">48</div>
<div class="b" style="left:10px;top:929px;width:25px;height:1px;background:#a9bcd3"></div>
<div class="t" style="left:11px;top:915px;font-size:12px;line-height:15px;color:#2b3f5f;width:25px;text-align:center;">49</div>
<div class="b" style="left:10px;top:944px;width:25px;height:1px;background:#a9bcd3"></div>
<div class="t" style="left:11px;top:930px;font-size:12px;line-height:15px;color:#2b3f5f;width:25px;text-align:center;">50</div>
<div class="b" style="left:10px;top:959px;width:25px;height:1px;background:#a9bcd3"></div>
<div class="t" style="left:11px;top:945px;font-size:12px;line-height:15px;color:#2b3f5f;width:25px;text-align:center;">51</div>
<div class="b" style="left:10px;top:974px;width:25px;height:1px;background:#a9bcd3"></div>
<div class="t" style="left:11px;top:960px;font-size:12px;line-height:15px;color:#2b3f5f;width:25px;text-align:center;">52</div>
<div class="b" style="left:10px;top:989px;width:25px;height:1px;background:#a9bcd3"></div>
<div class="t" style="left:11px;top:975px;font-size:12px;line-height:15px;color:#2b3f5f;width:25px;text-align:center;">53</div>
<div class="b" style="left:10px;top:1004px;width:25px;height:1px;background:#a9bcd3"></div>
<div class="t" style="left:11px;top:990px;font-size:12px;line-height:15px;color:#2b3f5f;width:25px;text-align:center;">54</div>
<div class="t" style="left:39px;top:185px;font-size:16px;line-height:20px;color:#000;letter-spacing:0.245px;">LST-GARCH(1,1) Model</div>
<div class="t" style="left:44px;top:205px;font-size:12px;line-height:15px;color:#000;letter-spacing:0.106px;">Given a series of observations, we want to estimate the data generation process with allowing variance to vary over time</div>
<div class="t" style="left:49.5px;top:220px;font-size:12px;line-height:15px;color:#000;white-space:pre;"><span style="letter-spacing:0.154px;">following a first order logistic smooth transition generalized autoregressive conditional heteroscedasticity model  (</span><span style="letter-spacing:0.096px;font-style:italic;">i.e. LST-GARCH(p,q), p=1 &amp; q=1</span><span style="letter-spacing:-0.181px;"> ).</span></div>
<div class="t" style="left:44px;top:235px;font-size:12px;line-height:15px;color:#000;letter-spacing:0.143px;">Keywords: Smooth Transition, GARCH, Nonlinear Regression, Volatility Modeling, Regime Switching, Heteroscedasticity,</div>
<div class="t" style="left:107px;top:250px;font-size:12px;line-height:15px;color:#000;letter-spacing:0.183px;">Maximum Likelihood, Time Varying Parameters, Forecasting, Time Series, Econometrics;</div>
<div class="t" style="left:44px;top:265px;font-size:12px;line-height:15px;color:#000;white-space:pre;"><span style="letter-spacing:0.097px;">Reference: Fransek, P. H. and van Dijk, D. (2000). </span><span style="letter-spacing:0.176px;font-style:italic;">Non-Linear Time Series Models in Empirical Finance</span><span style="letter-spacing:0.107px;"> , Cambridge University Press (see Chapter 4).</span></div>
<div class="t" style="left:44px;top:287px;font-size:12px;line-height:15px;color:#000;letter-spacing:0.112px;">Original model by Eren Ocakverdi</div>
<div class="t" style="left:116px;top:317px;font-size:12px;line-height:15px;color:#000;font-style:italic;letter-spacing:0.131px;">Initialization is often made by setting the starting values equal to the</div>
<div class="t" style="left:116px;top:332px;font-size:12px;line-height:15px;color:#000;font-style:italic;letter-spacing:0.167px;">empirical standard deviation of the prior estimated regression (or mean) equation</div>
<svg style="left:230px;top:350px" width="24" height="28" viewBox="0 0 24 28"><rect x="11" y="5" width="1.1" height="17" fill="#000"/><path d="M7 18 Q10 20.5 11.5 24 Q13 20.5 16 18 L15.6 18.6 Q13.5 19.5 11.5 21 Q9.5 19.5 7.4 18.6 Z" fill="#000" stroke="#000" stroke-width="0.9" stroke-linejoin="round"/></svg>
<div class="t" style="left:103.5px;top:358px;font-size:12px;line-height:15px;color:#000;font-weight:bold;width:400px;text-align:center;letter-spacing:-0.330px;">Log</div>
<div class="t" style="left:170.5px;top:358px;font-size:12px;line-height:15px;color:#000;font-weight:bold;width:400px;text-align:center;letter-spacing:0.093px;">Maximum</div>
<div class="t" style="left:357px;top:358px;font-size:12px;line-height:15px;color:#000;font-weight:bold;width:400px;text-align:center;letter-spacing:0.029px;">Estimated Coefficients</div>
<div class="t" style="left:38px;top:375px;font-size:12px;line-height:15px;color:#000;font-weight:bold;letter-spacing:-0.001px;">OBS</div>
<div class="t" style="left:-111.0px;top:375px;font-size:12px;line-height:15px;color:#000;font-weight:bold;width:400px;text-align:center;letter-spacing:0.326px;">y</div>
<div class="t" style="left:-63.0px;top:375px;font-size:12px;line-height:15px;color:#000;font-weight:bold;width:400px;text-align:center;letter-spacing:0.326px;">a</div>
<div class="t" style="left:-14.0px;top:375px;font-size:12px;line-height:15px;color:#000;font-weight:bold;width:400px;text-align:center;letter-spacing:-0.001px;">Theta</div>
<div class="t" style="left:40.5px;top:375px;font-size:12px;line-height:15px;color:#000;font-weight:bold;width:400px;text-align:center;letter-spacing:0.326px;">s</div>
<div class="t" style="left:103.5px;top:375px;font-size:12px;line-height:15px;color:#000;font-weight:bold;width:400px;text-align:center;letter-spacing:-0.200px;">Likelihood</div>
<div class="t" style="left:170.5px;top:375px;font-size:12px;line-height:15px;color:#000;font-weight:bold;width:400px;text-align:center;letter-spacing:-0.200px;">Likelihood</div>
<div class="b" style="left:36px;top:389px;width:369px;height:1px;background:#000"></div>
<div class="b" style="left:65px;top:374px;width:1px;height:620px;background:#000"></div>
<div class="b" style="left:113px;top:374px;width:1px;height:620px;background:#000"></div>
<div class="b" style="left:211px;top:390px;width:59px;height:15px;background:#ffcc99"></div>
<div class="b" style="left:337px;top:390px;width:67px;height:15px;background:#99ccff"></div>
<div class="t" style="left:38px;top:390px;font-size:12px;line-height:15px;color:#000;font-weight:bold;letter-spacing:0.326px;">1</div>
<div class="t" style="left:-188px;top:390px;font-size:12px;line-height:15px;color:#000;width:300px;text-align:right;letter-spacing:0.216px;">0.0100</div>
<div class="t" style="left:-31px;top:390px;font-size:12px;line-height:15px;color:#000;width:300px;text-align:right;letter-spacing:0.244px;">0.041302</div>
<div class="t" style="left:38px;top:405px;font-size:12px;line-height:15px;color:#000;font-weight:bold;letter-spacing:0.326px;">2</div>
<div class="t" style="left:-188px;top:405px;font-size:12px;line-height:15px;color:#000;width:300px;text-align:right;letter-spacing:0.216px;">0.0200</div>
<div class="t" style="left:-140px;top:405px;font-size:12px;line-height:15px;color:#000;width:300px;text-align:right;letter-spacing:0.216px;">0.0088</div>
<div class="t" style="left:-90px;top:405px;font-size:12px;line-height:15px;color:#000;width:300px;text-align:right;letter-spacing:0.216px;">0.5000</div>
<div class="t" style="left:-31px;top:405px;font-size:12px;line-height:15px;color:#000;width:300px;text-align:right;letter-spacing:0.244px;">0.040076</div>
<div class="t" style="left:36px;top:405px;font-size:12px;line-height:15px;color:#000;width:300px;text-align:right;letter-spacing:0.216px;">2.2738</div>
<div class="t" style="left:38px;top:420px;font-size:12px;line-height:15px;color:#000;font-weight:bold;letter-spacing:0.326px;">3</div>
<div class="t" style="left:-188px;top:420px;font-size:12px;line-height:15px;color:#000;width:300px;text-align:right;letter-spacing:0.216px;">0.0362</div>
<div class="t" style="left:-140px;top:420px;font-size:12px;line-height:15px;color:#000;width:300px;text-align:right;letter-spacing:0.216px;">0.0251</div>
<div class="t" style="left:-90px;top:420px;font-size:12px;line-height:15px;color:#000;width:300px;text-align:right;letter-spacing:0.216px;">0.7074</div>
<div class="t" style="left:-31px;top:420px;font-size:12px;line-height:15px;color:#000;width:300px;text-align:right;letter-spacing:0.244px;">0.037370</div>
<div class="t" style="left:36px;top:420px;font-size:12px;line-height:15px;color:#000;width:300px;text-align:right;letter-spacing:0.216px;">2.1432</div>
<div class="t" style="left:38px;top:435px;font-size:12px;line-height:15px;color:#000;font-weight:bold;letter-spacing:0.326px;">4</div>
<div class="t" style="left:-188px;top:435px;font-size:12px;line-height:15px;color:#000;width:300px;text-align:right;letter-spacing:0.216px;">0.0393</div>
<div class="t" style="left:-140px;top:435px;font-size:12px;line-height:15px;color:#000;width:300px;text-align:right;letter-spacing:0.216px;">0.0281</div>
<div class="t" style="left:-90px;top:435px;font-size:12px;line-height:15px;color:#000;width:300px;text-align:right;letter-spacing:0.216px;">0.9245</div>
<div class="t" style="left:-31px;top:435px;font-size:12px;line-height:15px;color:#000;width:300px;text-align:right;letter-spacing:0.244px;">0.035137</div>
<div class="t" style="left:36px;top:435px;font-size:12px;line-height:15px;color:#000;width:300px;text-align:right;letter-spacing:0.216px;">2.1092</div>
<div class="t" style="left:38px;top:450px;font-size:12px;line-height:15px;color:#000;font-weight:bold;letter-spacing:0.326px;">5</div>
<div class="t" style="left:-188px;top:450px;font-size:12px;line-height:15px;color:#000;width:300px;text-align:right;letter-spacing:0.186px;">-0.0369</div>
<div class="t" style="left:-140px;top:450px;font-size:12px;line-height:15px;color:#000;width:300px;text-align:right;letter-spacing:0.186px;">-0.0481</div>
<div class="t" style="left:-90px;top:450px;font-size:12px;line-height:15px;color:#000;width:300px;text-align:right;letter-spacing:0.216px;">0.9433</div>
<div class="t" style="left:-31px;top:450px;font-size:12px;line-height:15px;color:#000;width:300px;text-align:right;letter-spacing:0.244px;">0.033887</div>
<div class="t" style="left:36px;top:450px;font-size:12px;line-height:15px;color:#000;width:300px;text-align:right;letter-spacing:0.216px;">1.4574</div>
<div class="t" style="left:38px;top:465px;font-size:12px;line-height:15px;color:#000;font-weight:bold;letter-spacing:0.326px;">6</div>
<div class="t" style="left:-188px;top:465px;font-size:12px;line-height:15px;color:#000;width:300px;text-align:right;letter-spacing:0.216px;">0.0042</div>
<div class="t" style="left:-140px;top:465px;font-size:12px;line-height:15px;color:#000;width:300px;text-align:right;letter-spacing:0.186px;">-0.0070</div>
<div class="t" style="left:-90px;top:465px;font-size:12px;line-height:15px;color:#000;width:300px;text-align:right;letter-spacing:0.216px;">0.0081</div>
<div class="t" style="left:-31px;top:465px;font-size:12px;line-height:15px;color:#000;width:300px;text-align:right;letter-spacing:0.355px;">0.053114</div>
<div class="t" style="left:36px;top:465px;font-size:12px;line-height:15px;color:#000;width:300px;text-align:right;letter-spacing:0.216px;">2.0078</div>
<div class="t" style="left:38px;top:480px;font-size:12px;line-height:15px;color:#000;font-weight:bold;letter-spacing:0.326px;">7</div>
<div class="t" style="left:-188px;top:480px;font-size:12px;line-height:15px;color:#000;width:300px;text-align:right;letter-spacing:0.216px;">0.0945</div>
<div class="t" style="left:-140px;top:480px;font-size:12px;line-height:15px;color:#000;width:300px;text-align:right;letter-spacing:0.216px;">0.0833</div>
<div class="t" style="left:-90px;top:480px;font-size:12px;line-height:15px;color:#000;width:300px;text-align:right;letter-spacing:0.216px;">0.3328</div>
<div class="t" style="left:-31px;top:480px;font-size:12px;line-height:15px;color:#000;width:300px;text-align:right;letter-spacing:0.244px;">0.049548</div>
<div class="t" style="left:36px;top:480px;font-size:12px;line-height:15px;color:#000;width:300px;text-align:right;letter-spacing:0.216px;">0.6722</div>
<div class="t" style="left:38px;top:495px;font-size:12px;line-height:15px;color:#000;font-weight:bold;letter-spacing:0.326px;">8</div>
<div class="t" style="left:-188px;top:495px;font-size:12px;line-height:15px;color:#000;width:300px;text-align:right;letter-spacing:0.186px;">-0.0827</div>
<div class="t" style="left:-140px;top:495px;font-size:12px;line-height:15px;color:#000;width:300px;text-align:right;letter-spacing:0.186px;">-0.0939</div>
<div class="t" style="left:-90px;top:495px;font-size:12px;line-height:15px;color:#000;width:300px;text-align:right;letter-spacing:0.216px;">0.9998</div>
<div class="t" style="left:-31px;top:495px;font-size:12px;line-height:15px;color:#000;width:300px;text-align:right;letter-spacing:0.244px;">0.062239</div>
<div class="t" style="left:36px;top:495px;font-size:12px;line-height:15px;color:#000;width:300px;text-align:right;letter-spacing:0.216px;">0.7200</div>
<div class="t" style="left:38px;top:510px;font-size:12px;line-height:15px;color:#000;font-weight:bold;letter-spacing:0.326px;">9</div>
<div class="t" style="left:-188px;top:510px;font-size:12px;line-height:15px;color:#000;width:300px;text-align:right;letter-spacing:0.186px;">-0.0500</div>
<div class="t" style="left:-140px;top:510px;font-size:12px;line-height:15px;color:#000;width:300px;text-align:right;letter-spacing:0.186px;">-0.0612</div>
<div class="t" style="left:-90px;top:510px;font-size:12px;line-height:15px;color:#000;width:300px;text-align:right;letter-spacing:0.216px;">0.0001</div>
<div class="t" style="left:-31px;top:510px;font-size:12px;line-height:15px;color:#000;width:300px;text-align:right;letter-spacing:0.244px;">0.086754</div>
<div class="t" style="left:36px;top:510px;font-size:12px;line-height:15px;color:#000;width:300px;text-align:right;letter-spacing:0.216px;">1.2769</div>
<div class="t" style="left:38px;top:525px;font-size:12px;line-height:15px;color:#000;font-weight:bold;letter-spacing:0.326px;">10</div>
<div class="t" style="left:-188px;top:525px;font-size:12px;line-height:15px;color:#000;width:300px;text-align:right;letter-spacing:0.216px;">0.0246</div>
<div class="t" style="left:-140px;top:525px;font-size:12px;line-height:15px;color:#000;width:300px;text-align:right;letter-spacing:0.216px;">0.0134</div>
<div class="t" style="left:-90px;top:525px;font-size:12px;line-height:15px;color:#000;width:300px;text-align:right;letter-spacing:0.216px;">0.0022</div>
<div class="t" style="left:-31px;top:525px;font-size:12px;line-height:15px;color:#000;width:300px;text-align:right;letter-spacing:0.244px;">0.084198</div>
<div class="t" style="left:36px;top:525px;font-size:12px;line-height:15px;color:#000;width:300px;text-align:right;letter-spacing:0.216px;">1.5429</div>
<div class="t" style="left:38px;top:540px;font-size:12px;line-height:15px;color:#000;font-weight:bold;letter-spacing:0.657px;">11</div>
<div class="t" style="left:-188px;top:540px;font-size:12px;line-height:15px;color:#000;width:300px;text-align:right;letter-spacing:0.216px;">0.2300</div>
<div class="t" style="left:-140px;top:540px;font-size:12px;line-height:15px;color:#000;width:300px;text-align:right;letter-spacing:0.216px;">0.2188</div>
<div class="t" style="left:-90px;top:540px;font-size:12px;line-height:15px;color:#000;width:300px;text-align:right;letter-spacing:0.216px;">0.7930</div>
<div class="t" style="left:-31px;top:540px;font-size:12px;line-height:15px;color:#000;width:300px;text-align:right;letter-spacing:0.244px;">0.072372</div>
<div class="t" style="left:36px;top:540px;font-size:12px;line-height:15px;color:#000;width:300px;text-align:right;letter-spacing:0.186px;">-2.8637</div>
<div class="t" style="left:38px;top:555px;font-size:12px;line-height:15px;color:#000;font-weight:bold;letter-spacing:0.326px;">12</div>
<div class="t" style="left:-188px;top:555px;font-size:12px;line-height:15px;color:#000;width:300px;text-align:right;letter-spacing:0.186px;">-0.0174</div>
<div class="t" style="left:-140px;top:555px;font-size:12px;line-height:15px;color:#000;width:300px;text-align:right;letter-spacing:0.186px;">-0.0286</div>
<div class="t" style="left:-90px;top:555px;font-size:12px;line-height:15px;color:#000;width:300px;text-align:right;letter-spacing:0.216px;">1.0000</div>
<div class="t" style="left:-31px;top:555px;font-size:12px;line-height:15px;color:#000;width:300px;text-align:right;letter-spacing:0.244px;">0.135722</div>
<div class="t" style="left:36px;top:555px;font-size:12px;line-height:15px;color:#000;width:300px;text-align:right;letter-spacing:0.216px;">1.0560</div>
<div class="t" style="left:38px;top:570px;font-size:12px;line-height:15px;color:#000;font-weight:bold;letter-spacing:0.326px;">13</div>
<div class="t" style="left:-188px;top:570px;font-size:12px;line-height:15px;color:#000;width:300px;text-align:right;letter-spacing:0.186px;">-0.0337</div>
<div class="t" style="left:-140px;top:570px;font-size:12px;line-height:15px;color:#000;width:300px;text-align:right;letter-spacing:0.186px;">-0.0449</div>
<div class="t" style="left:-90px;top:570px;font-size:12px;line-height:15px;color:#000;width:300px;text-align:right;letter-spacing:0.216px;">0.0542</div>
<div class="t" style="left:-31px;top:570px;font-size:12px;line-height:15px;color:#000;width:300px;text-align:right;letter-spacing:0.244px;">0.108905</div>
<div class="t" style="left:36px;top:570px;font-size:12px;line-height:15px;color:#000;width:300px;text-align:right;letter-spacing:0.216px;">1.2135</div>
<div class="t" style="left:38px;top:585px;font-size:12px;line-height:15px;color:#000;font-weight:bold;letter-spacing:0.326px;">14</div>
<div class="t" style="left:-188px;top:585px;font-size:12px;line-height:15px;color:#000;width:300px;text-align:right;letter-spacing:0.186px;">-0.0388</div>
<div class="t" style="left:-140px;top:585px;font-size:12px;line-height:15px;color:#000;width:300px;text-align:right;letter-spacing:0.186px;">-0.0500</div>
<div class="t" style="left:-90px;top:585px;font-size:12px;line-height:15px;color:#000;width:300px;text-align:right;letter-spacing:0.513px;">0.0111</div>
<div class="t" style="left:-31px;top:585px;font-size:12px;line-height:15px;color:#000;width:300px;text-align:right;letter-spacing:0.244px;">0.093122</div>
<div class="t" style="left:36px;top:585px;font-size:12px;line-height:15px;color:#000;width:300px;text-align:right;letter-spacing:0.216px;">1.3107</div>
<div class="t" style="left:38px;top:600px;font-size:12px;line-height:15px;color:#000;font-weight:bold;letter-spacing:0.326px;">15</div>
<div class="t" style="left:-188px;top:600px;font-size:12px;line-height:15px;color:#000;width:300px;text-align:right;letter-spacing:0.186px;">-0.0384</div>
<div class="t" style="left:-140px;top:600px;font-size:12px;line-height:15px;color:#000;width:300px;text-align:right;letter-spacing:0.186px;">-0.0496</div>
<div class="t" style="left:-90px;top:600px;font-size:12px;line-height:15px;color:#000;width:300px;text-align:right;letter-spacing:0.216px;">0.0067</div>
<div class="t" style="left:-31px;top:600px;font-size:12px;line-height:15px;color:#000;width:300px;text-align:right;letter-spacing:0.244px;">0.084394</div>
<div class="t" style="left:36px;top:600px;font-size:12px;line-height:15px;color:#000;width:300px;text-align:right;letter-spacing:0.216px;">1.3805</div>
<div class="t" style="left:38px;top:615px;font-size:12px;line-height:15px;color:#000;font-weight:bold;letter-spacing:0.326px;">16</div>
<div class="t" style="left:-188px;top:615px;font-size:12px;line-height:15px;color:#000;width:300px;text-align:right;letter-spacing:0.186px;">-0.0922</div>
<div class="t" style="left:-140px;top:615px;font-size:12px;line-height:15px;color:#000;width:300px;text-align:right;letter-spacing:0.186px;">-0.1034</div>
<div class="t" style="left:-90px;top:615px;font-size:12px;line-height:15px;color:#000;width:300px;text-align:right;letter-spacing:0.216px;">0.0069</div>
<div class="t" style="left:-31px;top:615px;font-size:12px;line-height:15px;color:#000;width:300px;text-align:right;letter-spacing:0.244px;">0.078971</div>
<div class="t" style="left:36px;top:615px;font-size:12px;line-height:15px;color:#000;width:300px;text-align:right;letter-spacing:0.216px;">0.7622</div>
<div class="t" style="left:38px;top:630px;font-size:12px;line-height:15px;color:#000;font-weight:bold;letter-spacing:0.326px;">17</div>
<div class="t" style="left:-188px;top:630px;font-size:12px;line-height:15px;color:#000;width:300px;text-align:right;letter-spacing:0.186px;">-0.0522</div>
<div class="t" style="left:-140px;top:630px;font-size:12px;line-height:15px;color:#000;width:300px;text-align:right;letter-spacing:0.186px;">-0.0634</div>
<div class="t" style="left:-90px;top:630px;font-size:12px;line-height:15px;color:#000;width:300px;text-align:right;letter-spacing:0.216px;">0.0000</div>
<div class="t" style="left:-31px;top:630px;font-size:12px;line-height:15px;color:#000;width:300px;text-align:right;letter-spacing:0.244px;">0.098810</div>
<div class="t" style="left:36px;top:630px;font-size:12px;line-height:15px;color:#000;width:300px;text-align:right;letter-spacing:0.216px;">1.1899</div>
<div class="t" style="left:38px;top:645px;font-size:12px;line-height:15px;color:#000;font-weight:bold;letter-spacing:0.326px;">18</div>
<div class="t" style="left:-188px;top:645px;font-size:12px;line-height:15px;color:#000;width:300px;text-align:right;letter-spacing:0.186px;">-0.0564</div>
<div class="t" style="left:-140px;top:645px;font-size:12px;line-height:15px;color:#000;width:300px;text-align:right;letter-spacing:0.186px;">-0.0676</div>
<div class="t" style="left:-90px;top:645px;font-size:12px;line-height:15px;color:#000;width:300px;text-align:right;letter-spacing:0.216px;">0.0018</div>
<div class="t" style="left:-31px;top:645px;font-size:12px;line-height:15px;color:#000;width:300px;text-align:right;letter-spacing:0.244px;">0.092043</div>
<div class="t" style="left:36px;top:645px;font-size:12px;line-height:15px;color:#000;width:300px;text-align:right;letter-spacing:0.216px;">1.1972</div>
<div class="t" style="left:38px;top:660px;font-size:12px;line-height:15px;color:#000;font-weight:bold;letter-spacing:0.326px;">19</div>
<div class="t" style="left:-188px;top:660px;font-size:12px;line-height:15px;color:#000;width:300px;text-align:right;letter-spacing:0.216px;">0.0571</div>
<div class="t" style="left:-140px;top:660px;font-size:12px;line-height:15px;color:#000;width:300px;text-align:right;letter-spacing:0.216px;">0.0459</div>
<div class="t" style="left:-90px;top:660px;font-size:12px;line-height:15px;color:#000;width:300px;text-align:right;letter-spacing:0.216px;">0.0012</div>
<div class="t" style="left:-31px;top:660px;font-size:12px;line-height:15px;color:#000;width:300px;text-align:right;letter-spacing:0.244px;">0.089539</div>
<div class="t" style="left:36px;top:660px;font-size:12px;line-height:15px;color:#000;width:300px;text-align:right;letter-spacing:0.216px;">1.3627</div>
<div class="t" style="left:38px;top:675px;font-size:12px;line-height:15px;color:#000;font-weight:bold;letter-spacing:0.326px;">20</div>
<div class="t" style="left:-188px;top:675px;font-size:12px;line-height:15px;color:#000;width:300px;text-align:right;letter-spacing:0.186px;">-0.1402</div>
<div class="t" style="left:-140px;top:675px;font-size:12px;line-height:15px;color:#000;width:300px;text-align:right;letter-spacing:0.186px;">-0.1513</div>
<div class="t" style="left:-90px;top:675px;font-size:12px;line-height:15px;color:#000;width:300px;text-align:right;letter-spacing:0.216px;">0.9900</div>
<div class="t" style="left:-31px;top:675px;font-size:12px;line-height:15px;color:#000;width:300px;text-align:right;letter-spacing:0.244px;">0.080942</div>
<div class="t" style="left:36px;top:675px;font-size:12px;line-height:15px;color:#000;width:300px;text-align:right;letter-spacing:0.186px;">-0.1530</div>
<div class="t" style="left:38px;top:690px;font-size:12px;line-height:15px;color:#000;font-weight:bold;letter-spacing:0.326px;">21</div>
<div class="t" style="left:-188px;top:690px;font-size:12px;line-height:15px;color:#000;width:300px;text-align:right;letter-spacing:0.186px;">-0.0530</div>
<div class="t" style="left:-140px;top:690px;font-size:12px;line-height:15px;color:#000;width:300px;text-align:right;letter-spacing:0.186px;">-0.0642</div>
<div class="t" style="left:-90px;top:690px;font-size:12px;line-height:15px;color:#000;width:300px;text-align:right;letter-spacing:0.216px;">0.0000</div>
<div class="t" style="left:-31px;top:690px;font-size:12px;line-height:15px;color:#000;width:300px;text-align:right;letter-spacing:0.244px;">0.126099</div>
<div class="t" style="left:36px;top:690px;font-size:12px;line-height:15px;color:#000;width:300px;text-align:right;letter-spacing:0.216px;">1.0220</div>
<div class="t" style="left:38px;top:705px;font-size:12px;line-height:15px;color:#000;font-weight:bold;letter-spacing:0.326px;">22</div>
<div class="t" style="left:-188px;top:705px;font-size:12px;line-height:15px;color:#000;width:300px;text-align:right;letter-spacing:0.216px;">0.0681</div>
<div class="t" style="left:-140px;top:705px;font-size:12px;line-height:15px;color:#000;width:300px;text-align:right;letter-spacing:0.216px;">0.0570</div>
<div class="t" style="left:-90px;top:705px;font-size:12px;line-height:15px;color:#000;width:300px;text-align:right;letter-spacing:0.216px;">0.0016</div>
<div class="t" style="left:-31px;top:705px;font-size:12px;line-height:15px;color:#000;width:300px;text-align:right;letter-spacing:0.244px;">0.109329</div>
<div class="t" style="left:36px;top:705px;font-size:12px;line-height:15px;color:#000;width:300px;text-align:right;letter-spacing:0.216px;">1.1587</div>
<div class="t" style="left:38px;top:720px;font-size:12px;line-height:15px;color:#000;font-weight:bold;letter-spacing:0.326px;">23</div>
<div class="t" style="left:-188px;top:720px;font-size:12px;line-height:15px;color:#000;width:300px;text-align:right;letter-spacing:0.186px;">-0.0693</div>
<div class="t" style="left:-140px;top:720px;font-size:12px;line-height:15px;color:#000;width:300px;text-align:right;letter-spacing:0.186px;">-0.0805</div>
<div class="t" style="left:-90px;top:720px;font-size:12px;line-height:15px;color:#000;width:300px;text-align:right;letter-spacing:0.216px;">0.9967</div>
<div class="t" style="left:-31px;top:720px;font-size:12px;line-height:15px;color:#000;width:300px;text-align:right;letter-spacing:0.244px;">0.099162</div>
<div class="t" style="left:36px;top:720px;font-size:12px;line-height:15px;color:#000;width:300px;text-align:right;letter-spacing:0.216px;">1.0626</div>
<div class="t" style="left:38px;top:735px;font-size:12px;line-height:15px;color:#000;font-weight:bold;letter-spacing:0.326px;">24</div>
<div class="t" style="left:-188px;top:735px;font-size:12px;line-height:15px;color:#000;width:300px;text-align:right;letter-spacing:0.216px;">0.0599</div>
<div class="t" style="left:-140px;top:735px;font-size:12px;line-height:15px;color:#000;width:300px;text-align:right;letter-spacing:0.216px;">0.0487</div>
<div class="t" style="left:-90px;top:735px;font-size:12px;line-height:15px;color:#000;width:300px;text-align:right;letter-spacing:0.216px;">0.0003</div>
<div class="t" style="left:-31px;top:735px;font-size:12px;line-height:15px;color:#000;width:300px;text-align:right;letter-spacing:0.244px;">0.098550</div>
<div class="t" style="left:36px;top:735px;font-size:12px;line-height:15px;color:#000;width:300px;text-align:right;letter-spacing:0.216px;">1.2762</div>
<div class="t" style="left:38px;top:750px;font-size:12px;line-height:15px;color:#000;font-weight:bold;letter-spacing:0.326px;">25</div>
<div class="t" style="left:-188px;top:750px;font-size:12px;line-height:15px;color:#000;width:300px;text-align:right;letter-spacing:0.365px;">0.1139</div>
<div class="t" style="left:-140px;top:750px;font-size:12px;line-height:15px;color:#000;width:300px;text-align:right;letter-spacing:0.216px;">0.1027</div>
<div class="t" style="left:-90px;top:750px;font-size:12px;line-height:15px;color:#000;width:300px;text-align:right;letter-spacing:0.216px;">0.9924</div>
<div class="t" style="left:-31px;top:750px;font-size:12px;line-height:15px;color:#000;width:300px;text-align:right;letter-spacing:0.244px;">0.088854</div>
<div class="t" style="left:36px;top:750px;font-size:12px;line-height:15px;color:#000;width:300px;text-align:right;letter-spacing:0.216px;">0.8343</div>
<div class="t" style="left:38px;top:765px;font-size:12px;line-height:15px;color:#000;font-weight:bold;letter-spacing:0.326px;">26</div>
<div class="t" style="left:-188px;top:765px;font-size:12px;line-height:15px;color:#000;width:300px;text-align:right;letter-spacing:0.186px;">-0.0295</div>
<div class="t" style="left:-140px;top:765px;font-size:12px;line-height:15px;color:#000;width:300px;text-align:right;letter-spacing:0.186px;">-0.0407</div>
<div class="t" style="left:-90px;top:765px;font-size:12px;line-height:15px;color:#000;width:300px;text-align:right;letter-spacing:0.216px;">1.0000</div>
<div class="t" style="left:-31px;top:765px;font-size:12px;line-height:15px;color:#000;width:300px;text-align:right;letter-spacing:0.244px;">0.095023</div>
<div class="t" style="left:36px;top:765px;font-size:12px;line-height:15px;color:#000;width:300px;text-align:right;letter-spacing:0.216px;">1.3430</div>
<div class="t" style="left:38px;top:780px;font-size:12px;line-height:15px;color:#000;font-weight:bold;letter-spacing:0.326px;">27</div>
<div class="t" style="left:-188px;top:780px;font-size:12px;line-height:15px;color:#000;width:300px;text-align:right;letter-spacing:0.216px;">0.1300</div>
<div class="t" style="left:-140px;top:780px;font-size:12px;line-height:15px;color:#000;width:300px;text-align:right;letter-spacing:0.365px;">0.1188</div>
<div class="t" style="left:-90px;top:780px;font-size:12px;line-height:15px;color:#000;width:300px;text-align:right;letter-spacing:0.216px;">0.0168</div>
<div class="t" style="left:-31px;top:780px;font-size:12px;line-height:15px;color:#000;width:300px;text-align:right;letter-spacing:0.244px;">0.083145</div>
<div class="t" style="left:36px;top:780px;font-size:12px;line-height:15px;color:#000;width:300px;text-align:right;letter-spacing:0.216px;">0.5473</div>
<div class="t" style="left:38px;top:795px;font-size:12px;line-height:15px;color:#000;font-weight:bold;letter-spacing:0.326px;">28</div>
<div class="t" style="left:-188px;top:795px;font-size:12px;line-height:15px;color:#000;width:300px;text-align:right;letter-spacing:0.186px;">-0.0230</div>
<div class="t" style="left:-140px;top:795px;font-size:12px;line-height:15px;color:#000;width:300px;text-align:right;letter-spacing:0.186px;">-0.0342</div>
<div class="t" style="left:-90px;top:795px;font-size:12px;line-height:15px;color:#000;width:300px;text-align:right;letter-spacing:0.216px;">1.0000</div>
<div class="t" style="left:-31px;top:795px;font-size:12px;line-height:15px;color:#000;width:300px;text-align:right;letter-spacing:0.244px;">0.096879</div>
<div class="t" style="left:36px;top:795px;font-size:12px;line-height:15px;color:#000;width:300px;text-align:right;letter-spacing:0.216px;">1.3531</div>
<div class="t" style="left:38px;top:810px;font-size:12px;line-height:15px;color:#000;font-weight:bold;letter-spacing:0.326px;">29</div>
<div class="t" style="left:-188px;top:810px;font-size:12px;line-height:15px;color:#000;width:300px;text-align:right;letter-spacing:0.186px;">-0.0649</div>
<div class="t" style="left:-140px;top:810px;font-size:12px;line-height:15px;color:#000;width:300px;text-align:right;letter-spacing:0.186px;">-0.0761</div>
<div class="t" style="left:-90px;top:810px;font-size:12px;line-height:15px;color:#000;width:300px;text-align:right;letter-spacing:0.216px;">0.0317</div>
<div class="t" style="left:-31px;top:810px;font-size:12px;line-height:15px;color:#000;width:300px;text-align:right;letter-spacing:0.244px;">0.082964</div>
<div class="t" style="left:36px;top:810px;font-size:12px;line-height:15px;color:#000;width:300px;text-align:right;letter-spacing:0.216px;">1.1494</div>
<div class="t" style="left:38px;top:825px;font-size:12px;line-height:15px;color:#000;font-weight:bold;letter-spacing:0.326px;">30</div>
<div class="t" style="left:-188px;top:825px;font-size:12px;line-height:15px;color:#000;width:300px;text-align:right;letter-spacing:0.216px;">0.1353</div>
<div class="t" style="left:-140px;top:825px;font-size:12px;line-height:15px;color:#000;width:300px;text-align:right;letter-spacing:0.216px;">0.1242</div>
<div class="t" style="left:-90px;top:825px;font-size:12px;line-height:15px;color:#000;width:300px;text-align:right;letter-spacing:0.216px;">0.0005</div>
<div class="t" style="left:-31px;top:825px;font-size:12px;line-height:15px;color:#000;width:300px;text-align:right;letter-spacing:0.244px;">0.087932</div>
<div class="t" style="left:36px;top:825px;font-size:12px;line-height:15px;color:#000;width:300px;text-align:right;letter-spacing:0.216px;">0.5154</div>
<div class="t" style="left:38px;top:840px;font-size:12px;line-height:15px;color:#000;font-weight:bold;letter-spacing:0.326px;">31</div>
<div class="t" style="left:-188px;top:840px;font-size:12px;line-height:15px;color:#000;width:300px;text-align:right;letter-spacing:0.186px;">-0.0302</div>
<div class="t" style="left:-140px;top:840px;font-size:12px;line-height:15px;color:#000;width:300px;text-align:right;letter-spacing:0.186px;">-0.0414</div>
<div class="t" style="left:-90px;top:840px;font-size:12px;line-height:15px;color:#000;width:300px;text-align:right;letter-spacing:0.216px;">1.0000</div>
<div class="t" style="left:-31px;top:840px;font-size:12px;line-height:15px;color:#000;width:300px;text-align:right;letter-spacing:0.244px;">0.101945</div>
<div class="t" style="left:36px;top:840px;font-size:12px;line-height:15px;color:#000;width:300px;text-align:right;letter-spacing:0.216px;">1.2819</div>
<div class="t" style="left:38px;top:855px;font-size:12px;line-height:15px;color:#000;font-weight:bold;letter-spacing:0.326px;">32</div>
<div class="t" style="left:-188px;top:855px;font-size:12px;line-height:15px;color:#000;width:300px;text-align:right;letter-spacing:0.186px;">-0.0770</div>
<div class="t" style="left:-140px;top:855px;font-size:12px;line-height:15px;color:#000;width:300px;text-align:right;letter-spacing:0.186px;">-0.0882</div>
<div class="t" style="left:-90px;top:855px;font-size:12px;line-height:15px;color:#000;width:300px;text-align:right;letter-spacing:0.216px;">0.0156</div>
<div class="t" style="left:-31px;top:855px;font-size:12px;line-height:15px;color:#000;width:300px;text-align:right;letter-spacing:0.244px;">0.087790</div>
<div class="t" style="left:36px;top:855px;font-size:12px;line-height:15px;color:#000;width:300px;text-align:right;letter-spacing:0.216px;">1.0097</div>
<div class="t" style="left:38px;top:870px;font-size:12px;line-height:15px;color:#000;font-weight:bold;letter-spacing:0.326px;">33</div>
<div class="t" style="left:-188px;top:870px;font-size:12px;line-height:15px;color:#000;width:300px;text-align:right;letter-spacing:0.186px;">-0.0350</div>
<div class="t" style="left:-140px;top:870px;font-size:12px;line-height:15px;color:#000;width:300px;text-align:right;letter-spacing:0.186px;">-0.0462</div>
<div class="t" style="left:-90px;top:870px;font-size:12px;line-height:15px;color:#000;width:300px;text-align:right;letter-spacing:0.216px;">0.0001</div>
<div class="t" style="left:-31px;top:870px;font-size:12px;line-height:15px;color:#000;width:300px;text-align:right;letter-spacing:0.244px;">0.095692</div>
<div class="t" style="left:36px;top:870px;font-size:12px;line-height:15px;color:#000;width:300px;text-align:right;letter-spacing:0.365px;">1.3114</div>
<div class="t" style="left:38px;top:885px;font-size:12px;line-height:15px;color:#000;font-weight:bold;letter-spacing:0.326px;">34</div>
<div class="t" style="left:-188px;top:885px;font-size:12px;line-height:15px;color:#000;width:300px;text-align:right;letter-spacing:0.216px;">0.1581</div>
<div class="t" style="left:-140px;top:885px;font-size:12px;line-height:15px;color:#000;width:300px;text-align:right;letter-spacing:0.216px;">0.1469</div>
<div class="t" style="left:-90px;top:885px;font-size:12px;line-height:15px;color:#000;width:300px;text-align:right;letter-spacing:0.216px;">0.0098</div>
<div class="t" style="left:-31px;top:885px;font-size:12px;line-height:15px;color:#000;width:300px;text-align:right;letter-spacing:0.244px;">0.084934</div>
<div class="t" style="left:36px;top:885px;font-size:12px;line-height:15px;color:#000;width:300px;text-align:right;letter-spacing:0.216px;">0.0509</div>
<div class="t" style="left:38px;top:900px;font-size:12px;line-height:15px;color:#000;font-weight:bold;letter-spacing:0.326px;">35</div>
<div class="t" style="left:-188px;top:900px;font-size:12px;line-height:15px;color:#000;width:300px;text-align:right;letter-spacing:0.186px;">-0.0671</div>
<div class="t" style="left:-140px;top:900px;font-size:12px;line-height:15px;color:#000;width:300px;text-align:right;letter-spacing:0.186px;">-0.0782</div>
<div class="t" style="left:-90px;top:900px;font-size:12px;line-height:15px;color:#000;width:300px;text-align:right;letter-spacing:0.216px;">1.0000</div>
<div class="t" style="left:-31px;top:900px;font-size:12px;line-height:15px;color:#000;width:300px;text-align:right;letter-spacing:0.244px;">0.109018</div>
<div class="t" style="left:36px;top:900px;font-size:12px;line-height:15px;color:#000;width:300px;text-align:right;letter-spacing:0.216px;">1.0398</div>
<div class="t" style="left:38px;top:915px;font-size:12px;line-height:15px;color:#000;font-weight:bold;letter-spacing:0.326px;">36</div>
<div class="t" style="left:-188px;top:915px;font-size:12px;line-height:15px;color:#000;width:300px;text-align:right;letter-spacing:0.216px;">0.0939</div>
<div class="t" style="left:-140px;top:915px;font-size:12px;line-height:15px;color:#000;width:300px;text-align:right;letter-spacing:0.216px;">0.0827</div>
<div class="t" style="left:-90px;top:915px;font-size:12px;line-height:15px;color:#000;width:300px;text-align:right;letter-spacing:0.216px;">0.0004</div>
<div class="t" style="left:-31px;top:915px;font-size:12px;line-height:15px;color:#000;width:300px;text-align:right;letter-spacing:0.244px;">0.103360</div>
<div class="t" style="left:36px;top:915px;font-size:12px;line-height:15px;color:#000;width:300px;text-align:right;letter-spacing:0.216px;">1.0306</div>
<div class="t" style="left:38px;top:930px;font-size:12px;line-height:15px;color:#000;font-weight:bold;letter-spacing:0.326px;">37</div>
<div class="t" style="left:-188px;top:930px;font-size:12px;line-height:15px;color:#000;width:300px;text-align:right;letter-spacing:0.186px;">-0.0086</div>
<div class="t" style="left:-140px;top:930px;font-size:12px;line-height:15px;color:#000;width:300px;text-align:right;letter-spacing:0.186px;">-0.0198</div>
<div class="t" style="left:-90px;top:930px;font-size:12px;line-height:15px;color:#000;width:300px;text-align:right;letter-spacing:0.216px;">0.9997</div>
<div class="t" style="left:-31px;top:930px;font-size:12px;line-height:15px;color:#000;width:300px;text-align:right;letter-spacing:0.355px;">0.099911</div>
<div class="t" style="left:36px;top:930px;font-size:12px;line-height:15px;color:#000;width:300px;text-align:right;letter-spacing:0.216px;">1.3648</div>
<div class="t" style="left:38px;top:945px;font-size:12px;line-height:15px;color:#000;font-weight:bold;letter-spacing:0.326px;">38</div>
<div class="t" style="left:-188px;top:945px;font-size:12px;line-height:15px;color:#000;width:300px;text-align:right;letter-spacing:0.186px;">-0.0851</div>
<div class="t" style="left:-140px;top:945px;font-size:12px;line-height:15px;color:#000;width:300px;text-align:right;letter-spacing:0.186px;">-0.0963</div>
<div class="t" style="left:-90px;top:945px;font-size:12px;line-height:15px;color:#000;width:300px;text-align:right;letter-spacing:0.216px;">0.1210</div>
<div class="t" style="left:-31px;top:945px;font-size:12px;line-height:15px;color:#000;width:300px;text-align:right;letter-spacing:0.244px;">0.083101</div>
<div class="t" style="left:36px;top:945px;font-size:12px;line-height:15px;color:#000;width:300px;text-align:right;letter-spacing:0.216px;">0.8977</div>
<div class="t" style="left:38px;top:960px;font-size:12px;line-height:15px;color:#000;font-weight:bold;letter-spacing:0.326px;">39</div>
<div class="t" style="left:-188px;top:960px;font-size:12px;line-height:15px;color:#000;width:300px;text-align:right;letter-spacing:0.216px;">0.1956</div>
<div class="t" style="left:-140px;top:960px;font-size:12px;line-height:15px;color:#000;width:300px;text-align:right;letter-spacing:0.216px;">0.1844</div>
<div class="t" style="left:-90px;top:960px;font-size:12px;line-height:15px;color:#000;width:300px;text-align:right;letter-spacing:0.216px;">0.0001</div>
<div class="t" style="left:-31px;top:960px;font-size:12px;line-height:15px;color:#000;width:300px;text-align:right;letter-spacing:0.244px;">0.097161</div>
<div class="t" style="left:36px;top:960px;font-size:12px;line-height:15px;color:#000;width:300px;text-align:right;letter-spacing:0.186px;">-0.3887</div>
<div class="t" style="left:38px;top:975px;font-size:12px;line-height:15px;color:#000;font-weight:bold;letter-spacing:0.326px;">40</div>
<div class="t" style="left:-188px;top:975px;font-size:12px;line-height:15px;color:#000;width:300px;text-align:right;letter-spacing:0.186px;">-0.0417</div>
<div class="t" style="left:-140px;top:975px;font-size:12px;line-height:15px;color:#000;width:300px;text-align:right;letter-spacing:0.186px;">-0.0529</div>
<div class="t" style="left:-90px;top:975px;font-size:12px;line-height:15px;color:#000;width:300px;text-align:right;letter-spacing:0.216px;">1.0000</div>
<div class="t" style="left:-31px;top:975px;font-size:12px;line-height:15px;color:#000;width:300px;text-align:right;letter-spacing:0.244px;">0.131646</div>
<div class="t" style="left:36px;top:975px;font-size:12px;line-height:15px;color:#000;width:300px;text-align:right;letter-spacing:0.216px;">1.0280</div>
<div class="t" style="left:38px;top:990px;font-size:12px;line-height:15px;color:#000;font-weight:bold;letter-spacing:0.326px;">41</div>
<div class="t" style="left:-188px;top:990px;font-size:12px;line-height:15px;color:#000;width:300px;text-align:right;letter-spacing:0.216px;">0.0919</div>
<div class="t" style="left:-140px;top:990px;font-size:12px;line-height:15px;color:#000;width:300px;text-align:right;letter-spacing:0.216px;">0.1031</div>
<div class="t" style="left:-90px;top:990px;font-size:12px;line-height:15px;color:#000;width:300px;text-align:right;letter-spacing:0.216px;">0.0050</div>
<div class="t" style="left:-31px;top:990px;font-size:12px;line-height:15px;color:#000;width:300px;text-align:right;letter-spacing:0.355px;">0.110087</div>
<div class="t" style="left:36px;top:990px;font-size:12px;line-height:15px;color:#000;width:300px;text-align:right;letter-spacing:0.216px;">0.3482</div>
<div class="t" style="left:103px;top:390px;font-size:12px;line-height:15px;color:#000;width:300px;text-align:right;letter-spacing:0.244px;">197.3277</div>
<div class="b" style="left:421px;top:374px;width:118px;height:1px;background:#000"></div>
<div class="b" style="left:421px;top:404px;width:118px;height:1px;background:#000"></div>
<div class="b" style="left:421px;top:374px;width:1px;height:31px;background:#000"></div>
<div class="b" style="left:538px;top:374px;width:1px;height:31px;background:#000"></div>
<div class="b" style="left:538px;top:374px;width:117px;height:1px;background:#000"></div>
<div class="b" style="left:538px;top:434px;width:117px;height:1px;background:#000"></div>
<div class="b" style="left:538px;top:374px;width:1px;height:61px;background:#000"></div>
<div class="b" style="left:654px;top:374px;width:1px;height:61px;background:#000"></div>
<div class="b" style="left:654px;top:374px;width:117px;height:1px;background:#000"></div>
<div class="b" style="left:654px;top:434px;width:117px;height:1px;background:#000"></div>
<div class="b" style="left:654px;top:374px;width:1px;height:61px;background:#000"></div>
<div class="b" style="left:770px;top:374px;width:1px;height:61px;background:#000"></div>
<div class="b" style="left:593px;top:404px;width:61px;height:1px;background:#000"></div>
<div class="b" style="left:593px;top:419px;width:61px;height:1px;background:#000"></div>
<div class="b" style="left:710px;top:404px;width:60px;height:1px;background:#000"></div>
<div class="b" style="left:710px;top:419px;width:60px;height:1px;background:#000"></div>
<div class="t" style="left:424px;top:375px;width:114px;overflow:hidden;font-size:12px;line-height:15px;font-style:italic;letter-spacing:0.289px">Regression Equation</div>
<div class="t" style="left:541px;top:375px;font-size:12px;line-height:15px;color:#000;font-style:italic;letter-spacing:0.195px;">Variance Equation-1</div>
<div class="t" style="left:657px;top:375px;font-size:12px;line-height:15px;color:#000;font-style:italic;letter-spacing:0.195px;">Variance Equation-2</div>
<div class="t" style="left:773px;top:375px;font-size:12px;line-height:15px;color:#000;font-style:italic;letter-spacing:0.118px;">Stationarity Condition(s)</div>
<div class="t" style="left:188px;top:390px;font-size:12px;line-height:15px;color:#000;font-weight:bold;width:300px;text-align:right;letter-spacing:0.002px;">alpha =</div>
<div class="t" style="left:237px;top:390px;font-size:12px;line-height:15px;color:#0000ff;width:300px;text-align:right;letter-spacing:0.365px;">0.0112</div>
<div class="t" style="left:291px;top:390px;font-size:12px;line-height:15px;color:#000;font-weight:bold;width:300px;text-align:right;letter-spacing:0.194px;">beta0 =</div>
<div class="t" style="left:352px;top:390px;font-size:12px;line-height:15px;color:#0000ff;width:300px;text-align:right;letter-spacing:0.365px;">0.0011</div>
<div class="t" style="left:291px;top:405px;font-size:12px;line-height:15px;color:#000;font-weight:bold;width:300px;text-align:right;letter-spacing:0.194px;">beta1 =</div>
<div class="t" style="left:352px;top:405px;font-size:12px;line-height:15px;color:#0000ff;width:300px;text-align:right;letter-spacing:0.216px;">0.4882</div>
<div class="t" style="left:291px;top:420px;font-size:12px;line-height:15px;color:#000;font-weight:bold;width:300px;text-align:right;letter-spacing:0.194px;">beta2 =</div>
<div class="t" style="left:352px;top:420px;font-size:12px;line-height:15px;color:#0000ff;width:300px;text-align:right;letter-spacing:0.216px;">0.5582</div>
<div class="t" style="left:407px;top:390px;font-size:12px;line-height:15px;color:#000;font-weight:bold;width:300px;text-align:right;letter-spacing:0.194px;">beta3 =</div>
<div class="t" style="left:469px;top:390px;font-size:12px;line-height:15px;color:#0000ff;width:300px;text-align:right;letter-spacing:0.513px;">-0.0011</div>
<div class="t" style="left:407px;top:405px;font-size:12px;line-height:15px;color:#000;font-weight:bold;width:300px;text-align:right;letter-spacing:0.194px;">beta4 =</div>
<div class="t" style="left:469px;top:405px;font-size:12px;line-height:15px;color:#0000ff;width:300px;text-align:right;letter-spacing:0.386px;">-0.1836</div>
<div class="t" style="left:407px;top:420px;font-size:12px;line-height:15px;color:#000;font-weight:bold;width:300px;text-align:right;letter-spacing:0.194px;">beta5 =</div>
<div class="t" style="left:469px;top:420px;font-size:12px;line-height:15px;color:#0000ff;width:300px;text-align:right;letter-spacing:0.216px;">0.1880</div>
<div class="t" style="left:794px;top:420px;font-size:12px;line-height:15px;color:#000;letter-spacing:-0.117px;white-space:pre;">&lt;=  &gt;=</div>
<div class="b" style="left:421px;top:449px;width:118px;height:1px;background:#000"></div>
<div class="b" style="left:421px;top:494px;width:118px;height:1px;background:#000"></div>
<div class="b" style="left:421px;top:449px;width:1px;height:46px;background:#000"></div>
<div class="b" style="left:538px;top:449px;width:1px;height:46px;background:#000"></div>
<div class="t" style="left:424px;top:450px;font-size:12px;line-height:15px;color:#000;font-style:italic;letter-spacing:0.184px;">Transition Equation</div>
<div class="t" style="left:189px;top:465px;font-size:12px;line-height:15px;color:#000;font-weight:bold;width:300px;text-align:right;letter-spacing:0.256px;">lambda =</div>
<div class="t" style="left:238px;top:465px;font-size:12px;line-height:15px;color:#000;width:300px;text-align:right;letter-spacing:0.326px;">100</div>
<div class="t" style="left:189px;top:480px;font-size:12px;line-height:15px;color:#000;font-weight:bold;width:300px;text-align:right;letter-spacing:-0.002px;">zet =</div>
<div class="t" style="left:238px;top:480px;font-size:12px;line-height:15px;color:#000;width:300px;text-align:right;letter-spacing:0.326px;">0</div>
<div class="t" style="left:541px;top:450px;font-size:12px;line-height:15px;color:#000;font-style:italic;letter-spacing:0.141px;">Although the Scale and Location parameters are fixed here,</div>
<div class="t" style="left:541px;top:465px;font-size:12px;line-height:15px;color:#000;font-style:italic;letter-spacing:0.140px;">they can also be estimated through the model if no prior</div>
<div class="t" style="left:541px;top:480px;font-size:12px;line-height:15px;color:#000;font-style:italic;letter-spacing:0.177px;">information is available on their true values.</div>
<div class="t" style="left:407px;top:525px;font-size:12px;line-height:15px;color:#000;white-space:pre;letter-spacing:0.08px;"><i>*The y<span style="font-size:9px"> t </span> sequence is estimated by the following equations:</i></div>
<div class="t" style="left:407px;top:540px;font-size:12px;line-height:15px;color:#000;white-space:pre;letter-spacing:0.08px;">y<span style="font-size:10px">t</span> = <b>alpha</b> + a<span style="font-size:10px">t</span></div>
<div class="t" style="left:407px;top:555px;font-size:12px;line-height:15px;color:#000;white-space:pre;letter-spacing:0.08px;">a<span style="font-size:10px">t</span> = s<span style="font-size:10px">t</span>*e<span style="font-size:10px">t</span></div>
<div class="t" style="left:407px;top:570px;font-size:12px;line-height:15px;color:#000;white-space:pre;letter-spacing:0.08px;">s<span style="font-size:10px">t</span>^2 = <b>beta0</b> + <b>beta1</b>*(a<span style="font-size:10px">t-1</span>)^2 +<b>beta2</b>*(s<span style="font-size:10px">t-1</span>)^2 + <b>theta</b>*[<b>beta3</b> + <b>beta4</b>*(a<span style="font-size:10px">t-1</span>)^2 +<b>beta5</b>*(s<span style="font-size:10px">t-1</span>)^2]</div>
<div class="t" style="left:407px;top:585px;font-size:12px;line-height:15px;color:#000;white-space:pre;letter-spacing:0.08px;"><b>theta</b> =1/(1 + exp(-<b>lambda</b>*(a<span style="font-size:10px">t-1</span> - <b>zet</b>)))  --> smooth transition equation</div>
<div class="t" style="left:407px;top:600px;font-size:12px;line-height:15px;color:#000;white-space:pre;letter-spacing:0.08px;"><i>where e<span style="font-size:9px"> t </span> is a white noise process.</i></div>
<div class="t" style="left:425px;top:630px;font-size:12px;line-height:15px;color:#000;font-weight:bold;font-style:italic;letter-spacing:0.025px;">True Coefficients</div>
<div class="t" style="left:187px;top:645px;font-size:12px;line-height:15px;color:#000;font-weight:bold;font-style:italic;width:300px;text-align:right;letter-spacing:-0.098px;">alpha =</div>
<div class="t" style="left:235px;top:645px;font-size:12px;line-height:15px;color:#000;font-style:italic;width:300px;text-align:right;letter-spacing:0.216px;">0.0100</div>
<div class="t" style="left:547px;top:645px;font-size:12px;line-height:15px;color:#000;font-style:italic;letter-spacing:0.119px;">'---&gt; Regression Equation</div>
<div class="t" style="left:187px;top:660px;font-size:12px;line-height:15px;color:#000;font-weight:bold;font-style:italic;width:300px;text-align:right;letter-spacing:0.044px;">beta0 =</div>
<div class="t" style="left:235px;top:660px;font-size:12px;line-height:15px;color:#000;font-style:italic;width:300px;text-align:right;letter-spacing:0.216px;">0.0004</div>
<div class="t" style="left:187px;top:675px;font-size:12px;line-height:15px;color:#000;font-weight:bold;font-style:italic;width:300px;text-align:right;letter-spacing:0.044px;">beta1 =</div>
<div class="t" style="left:235px;top:675px;font-size:12px;line-height:15px;color:#000;font-style:italic;width:300px;text-align:right;letter-spacing:0.216px;">0.5000</div>
<div class="t" style="left:547px;top:675px;font-size:12px;line-height:15px;color:#000;font-style:italic;letter-spacing:0.123px;">'---&gt; Variance Equation-1</div>
<div class="t" style="left:187px;top:690px;font-size:12px;line-height:15px;color:#000;font-weight:bold;font-style:italic;width:300px;text-align:right;letter-spacing:0.044px;">beta2 =</div>
<div class="t" style="left:235px;top:690px;font-size:12px;line-height:15px;color:#000;font-style:italic;width:300px;text-align:right;letter-spacing:0.216px;">0.6000</div>
<div class="t" style="left:187px;top:705px;font-size:12px;line-height:15px;color:#000;font-weight:bold;font-style:italic;width:300px;text-align:right;letter-spacing:0.044px;">beta3 =</div>
<div class="t" style="left:496px;top:705px;font-size:12px;line-height:15px;color:#000;font-weight:bold;font-style:italic;letter-spacing:0.526px;">#####</div>
<div class="t" style="left:187px;top:720px;font-size:12px;line-height:15px;color:#000;font-weight:bold;font-style:italic;width:300px;text-align:right;letter-spacing:0.044px;">beta4 =</div>
<div class="t" style="left:496px;top:720px;font-size:12px;line-height:15px;color:#000;font-weight:bold;font-style:italic;letter-spacing:0.526px;">#####</div>
<div class="t" style="left:547px;top:720px;font-size:12px;line-height:15px;color:#000;font-style:italic;letter-spacing:0.123px;">'---&gt; Variance Equation-2</div>
<div class="t" style="left:187px;top:735px;font-size:12px;line-height:15px;color:#000;font-weight:bold;font-style:italic;width:300px;text-align:right;letter-spacing:0.044px;">beta5 =</div>
<div class="t" style="left:235px;top:735px;font-size:12px;line-height:15px;color:#000;font-style:italic;width:300px;text-align:right;letter-spacing:0.216px;">0.2000</div>
<div class="t" style="left:187px;top:750px;font-size:12px;line-height:15px;color:#000;font-weight:bold;font-style:italic;width:300px;text-align:right;letter-spacing:-0.044px;">lambda =</div>
<div class="t" style="left:235px;top:750px;font-size:12px;line-height:15px;color:#000;font-style:italic;width:300px;text-align:right;letter-spacing:0.326px;">100</div>
<div class="t" style="left:547px;top:750px;font-size:12px;line-height:15px;color:#000;font-style:italic;letter-spacing:0.115px;">'---&gt; Transition Equation</div>
<div class="t" style="left:187px;top:765px;font-size:12px;line-height:15px;color:#000;font-weight:bold;font-style:italic;width:300px;text-align:right;letter-spacing:-0.002px;">zet =</div>
<div class="t" style="left:235px;top:765px;font-size:12px;line-height:15px;color:#000;font-style:italic;width:300px;text-align:right;letter-spacing:0.326px;">0</div>
<div class="t" style="left:187px;top:780px;font-size:12px;line-height:15px;color:#000;font-weight:bold;font-style:italic;width:300px;text-align:right;letter-spacing:0.078px;">s0 =</div>
<div class="t" style="left:235px;top:780px;font-size:12px;line-height:15px;color:#000;font-style:italic;width:300px;text-align:right;letter-spacing:0.216px;">0.0400</div>
<div class="t" style="left:547px;top:780px;font-size:12px;line-height:15px;color:#000;font-style:italic;letter-spacing:0.103px;">'---&gt; Initial value of the conditional standard deviation</div>
<div class="b" style="left:421px;top:659px;width:118px;height:1px;background:#000"></div>
<div class="b" style="left:421px;top:704px;width:118px;height:1px;background:#000"></div>
<div class="b" style="left:421px;top:749px;width:118px;height:1px;background:#000"></div>
<div class="b" style="left:421px;top:779px;width:118px;height:1px;background:#000"></div>
<div class="b" style="left:1165px;top:167px;width:16px;height:827px;background:linear-gradient(90deg,#a8bcd6,#b4c8e0 40%,#c4d4ea)"></div>
<div class="b" style="left:1166px;top:168px;width:14px;height:8px;border:1px solid #98aac4;background:#f3f6fb"></div>
<div class="b" style="left:1169px;top:171px;width:8px;height:1px;background:#98aac4"></div>
<svg style="left:1166px;top:178px" width="14" height="12" viewBox="0 0 14 12"><path d="M3 9 H11 L7 4.5 Z" fill="#4a5a78"/></svg>
<div class="b" style="left:1166px;top:192px;width:14px;height:160px;border:1px solid #8ea3c0;border-radius:2px;background:linear-gradient(90deg,#d6e2f2,#bccde4 60%,#b2c4de)"></div>
<svg style="left:1166px;top:265px" width="14" height="10" viewBox="0 0 14 10"><path d="M4 1.5 H10 M4 3.5 H10 M4 5.5 H10 M4 7.5 H10" stroke="#6a7a94" stroke-width="0.9"/></svg>
<svg style="left:1166px;top:979px" width="14" height="12" viewBox="0 0 14 12"><path d="M3 4 H11 L7 8.5 Z" fill="#4a5a78"/></svg>
<div class="b" style="left:10px;top:994px;width:1171px;height:15px;background:linear-gradient(180deg,#d4e0f0,#c6d5ea)"></div>
<div class="b" style="left:10px;top:994px;width:1171px;height:1px;background:#7d96b6"></div>
<div class="b" style="left:10px;top:995px;width:362px;height:1px;background:rgba(255,255,255,0.55)"></div>
<svg style="left:14px;top:995px" width="56" height="14" viewBox="0 0 56 14">
<rect x="2" y="3" width="1.3" height="8" fill="#5a6a84"/><path d="M8.5 3 V11 L4 7 Z" fill="#5a6a84"/>
<path d="M22 3 V11 L17.5 7 Z" fill="#5a6a84"/>
<path d="M32 3 V11 L36.5 7 Z" fill="#5a6a84"/>
<path d="M45.5 3 V11 L50 7 Z" fill="#5a6a84"/><rect x="51" y="3" width="1.3" height="8" fill="#5a6a84"/>
</svg>
<div class="b" style="left:71px;top:994px;width:1px;height:15px;background:#a4b6ce"></div>
<svg style="left:150px;top:994px" width="160" height="16" viewBox="0 0 160 16">
<path d="M1 0 L8 15.5 H136 L147 0 Z" fill="#ffffff"/>
<path d="M136 15.5 L147 0.5 H160" fill="none" stroke="#8ea2bf" stroke-width="1"/>
</svg>
<div class="b" style="left:72px;top:994px;width:87px;height:15px;border:1px solid #8ea2bf;border-bottom:none;border-radius:2px 2px 0 0;background:linear-gradient(180deg,#e6eef8,#d2deef)"></div>
<svg style="left:153px;top:1003px" width="10" height="7" viewBox="0 0 10 7"><path d="M1 6.5 L5 0.5 L8 6.5" fill="#ffffff" stroke="#8ea2bf" stroke-width="0.8"/></svg>
<div class="t" style="left:86px;top:995px;font-size:12px;line-height:14px;color:#2b3f5f;letter-spacing:0.2px">WB! Status</div>
<div class="t" style="left:169px;top:995px;font-size:12px;line-height:14px;color:#2b3f5f;font-weight:bold;">LST-GARCH_Model</div>
<div class="b" style="left:372px;top:995px;width:8px;height:14px;border:1px solid #9aaac2;background:#f0f4fa"></div>
<div class="b" style="left:375px;top:998px;width:1px;height:8px;background:#9aaac2"></div>
<div class="b" style="left:381px;top:994px;width:784px;height:15px;background:linear-gradient(180deg,#a8bcd6,#b4c8e0 40%,#c4d4ea)"></div>
<svg style="left:382px;top:996px" width="12" height="12" viewBox="0 0 12 12"><path d="M8 1.5 V9.5 L3.5 5.5 Z" fill="#4a5a78"/></svg>
<div class="b" style="left:397px;top:994px;width:710px;height:16px;border:1px solid #8ea3c0;border-radius:2px;background:linear-gradient(180deg,#d6e2f2,#bccde4 60%,#b2c4de)"></div>
<svg style="left:747px;top:996px" width="10" height="12" viewBox="0 0 10 12"><path d="M2 2.5 V9.5 M4 2.5 V9.5 M6 2.5 V9.5" stroke="#6a7a94" stroke-width="0.9"/></svg>
<svg style="left:1143px;top:996px" width="12" height="12" viewBox="0 0 12 12"><path d="M3.5 1.5 V9.5 L8 5.5 Z" fill="#4a5a78"/></svg>
<div class="b" style="left:1156px;top:995px;width:9px;height:14px;border:1px solid #9aaac2;background:#f0f4fa"></div>
<div class="b" style="left:1160px;top:998px;width:1px;height:8px;background:#9aaac2"></div>
<div class="b" style="left:1165px;top:994px;width:16px;height:16px;background:#d7e2f0"></div>
<div class="b" style="left:10px;top:1008px;width:1172px;height:1px;background:#f2f6fb"></div>
<div class="b" style="left:10px;top:1009px;width:1172px;height:1px;background:#7d95b3"></div>
<div class="b" style="left:10px;top:1010px;width:1172px;height:1px;background:#f5f8fc"></div>
<div class="b" style="left:10px;top:1011px;width:1172px;height:21px;background:linear-gradient(180deg,#dfe8f5 0%,#cdd9ea 50%,#b9c8de 100%)"></div>
<div class="b" style="left:10px;top:1032px;width:1172px;height:1px;background:#4a6a78"></div>
<div class="t" style="left:18px;top:1014px;font-size:11.5px;line-height:15px;color:#1e395b;">Ready</div>
<div class="b" style="left:57px;top:1012px;width:1px;height:19px;background:#a8b8cc;box-shadow:1px 0 0 #f0f4fa"></div>
<div class="b" style="left:930px;top:1012px;width:1px;height:19px;background:#a8b8cc;box-shadow:1px 0 0 #f0f4fa"></div>
<svg style="left:934px;top:1011px" width="248" height="21" viewBox="0 0 248 21">
<rect x="1.5" y="1.5" width="18" height="18" rx="2" fill="#fde38a" stroke="#e0b040"/>
<rect x="5" y="5" width="11" height="11" fill="#fff" stroke="#4a4a4a" stroke-width="0.8"/>
<path d="M5 8.7 H16 M5 12.3 H16 M8.7 5 V16 M12.3 5 V16" stroke="#4a4a4a" stroke-width="1.2"/>
<rect x="22.5" y="4.5" width="13" height="13" fill="#8c8c8c" stroke="#6a6a6a" stroke-width="0.8"/>
<rect x="25.5" y="7" width="7" height="8" fill="#f2f2f2" stroke="#555" stroke-width="0.6"/>
<path d="M27 9 H31 M27 11 H31 M27 13 H31" stroke="#777" stroke-width="0.6"/>
<rect x="40.5" y="4.5" width="14" height="13" fill="#8c8c8c" stroke="#6a6a6a" stroke-width="0.8"/>
<rect x="42.5" y="6" width="4" height="8" fill="#f2f2f2"/><rect x="48" y="6" width="4.5" height="5" fill="#f2f2f2"/>
<circle cx="103.7" cy="10.5" r="7.6" fill="#eef2f8" stroke="#7a8698" stroke-width="1"/>
<rect x="99" y="9.5" width="9.5" height="2" fill="#3a4658"/>
<path d="M111.5 10.5 H212" stroke="#9aa6b6" stroke-width="1"/>
<path d="M153.5 4.5 H161.5 V13 L157.5 17 L153.5 13 Z" fill="#f6f8fb" stroke="#7a8698" stroke-width="1"/>
<circle cx="220" cy="10.5" r="7.6" fill="#eef2f8" stroke="#7a8698" stroke-width="1"/>
<rect x="215.5" y="9.5" width="9.5" height="2" fill="#3a4658"/><rect x="219.2" y="5.8" width="2" height="9.5" fill="#3a4658"/>
<circle cx="244" cy="19" r="0.8" fill="#9aa6b6"/><circle cx="241" cy="19" r="0.8" fill="#9aa6b6"/><circle cx="238" cy="19" r="0.8" fill="#9aa6b6"/>
<circle cx="244" cy="16" r="0.8" fill="#9aa6b6"/><circle cx="241" cy="16" r="0.8" fill="#9aa6b6"/><circle cx="244" cy="13" r="0.8" fill="#9aa6b6"/>
</svg>
<div class="t" style="left:1000px;top:1014px;font-size:12px;line-height:15px;color:#1e395b;">90%</div>
<div class="b" style="left:9px;top:51px;width:1px;height:982px;background:#3a6070"></div>
<div class="b" style="left:1181px;top:51px;width:1px;height:982px;background:#1e3c5c"></div>
</body></html>
